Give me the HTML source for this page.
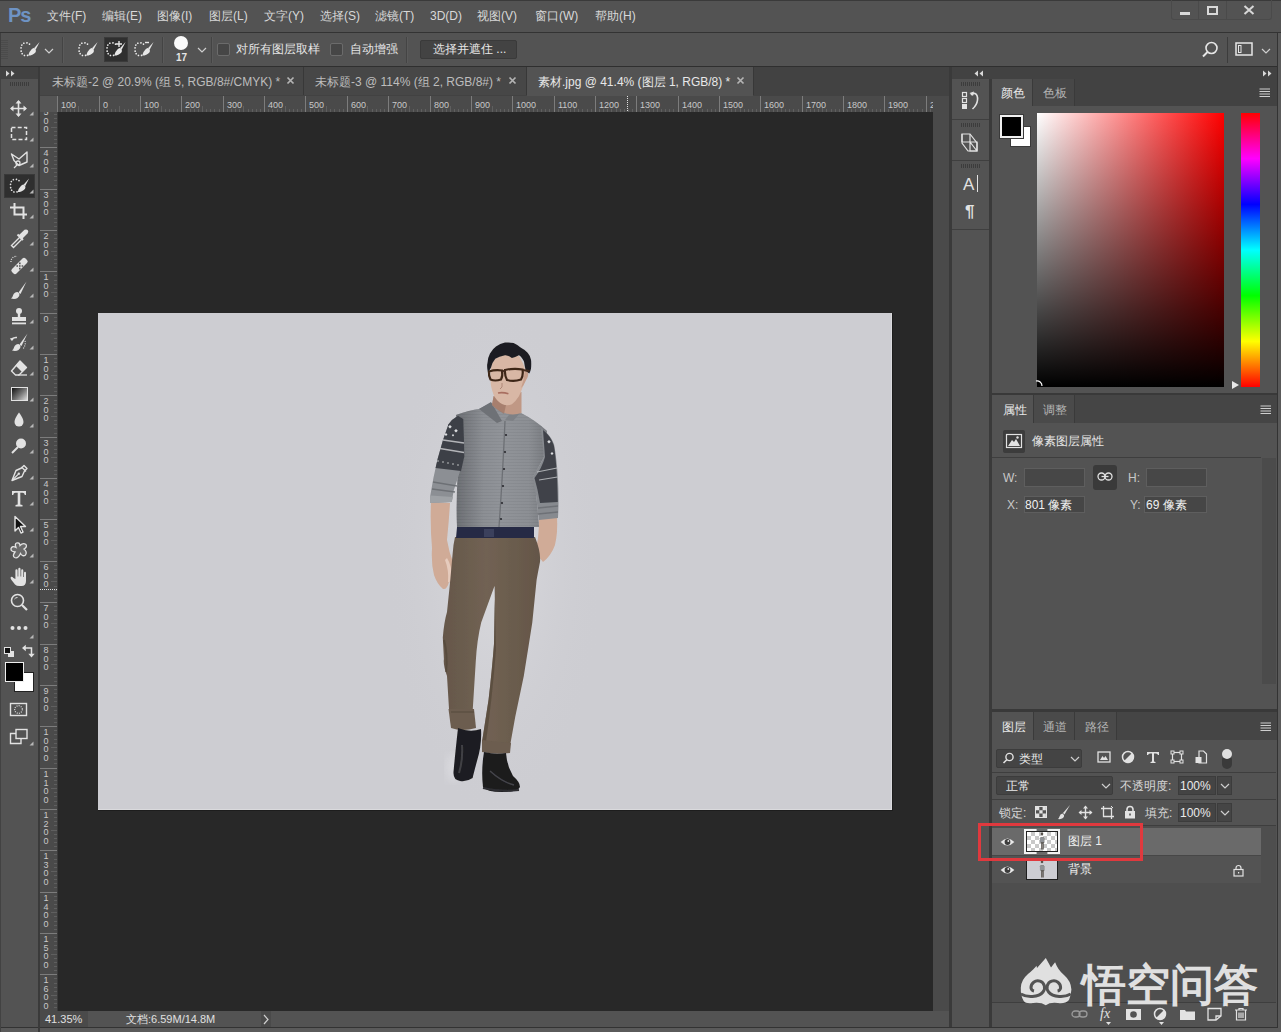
<!DOCTYPE html>
<html><head><meta charset="utf-8">
<style>
*{box-sizing:border-box;margin:0;padding:0}
html,body{width:1281px;height:1032px;overflow:hidden;background:#535353;font-family:"Liberation Sans",sans-serif;color:#e6e6e6;font-size:12px}
.a{position:absolute}
.t{position:absolute;white-space:nowrap;line-height:1}
svg{overflow:visible}
</style></head><body>
<div class="a" style="left:0px;top:0px;width:1281px;height:1px;background:#3a3a3a;"></div>
<div class="a" style="left:0px;top:32px;width:1281px;height:1px;background:#333;"></div>
<div class="t" style="left:8px;top:5px;font-size:20px;font-weight:bold;color:#6e93c4;letter-spacing:-1px">Ps</div>
<div class="t" style="left:47px;top:10px;color:#d8d8d8">文件(F)</div>
<div class="t" style="left:102px;top:10px;color:#d8d8d8">编辑(E)</div>
<div class="t" style="left:157px;top:10px;color:#d8d8d8">图像(I)</div>
<div class="t" style="left:209px;top:10px;color:#d8d8d8">图层(L)</div>
<div class="t" style="left:264px;top:10px;color:#d8d8d8">文字(Y)</div>
<div class="t" style="left:320px;top:10px;color:#d8d8d8">选择(S)</div>
<div class="t" style="left:375px;top:10px;color:#d8d8d8">滤镜(T)</div>
<div class="t" style="left:430px;top:10px;color:#d8d8d8">3D(D)</div>
<div class="t" style="left:477px;top:10px;color:#d8d8d8">视图(V)</div>
<div class="t" style="left:535px;top:10px;color:#d8d8d8">窗口(W)</div>
<div class="t" style="left:595px;top:10px;color:#d8d8d8">帮助(H)</div>
<div class="a" style="left:1171px;top:0px;width:101px;height:20px;border:1px solid #4a4a4a;border-top:none;border-radius:0 0 3px 3px"></div>
<div class="a" style="left:1198px;top:1px;width:1px;height:18px;background:#4a4a4a;"></div>
<div class="a" style="left:1226px;top:1px;width:1px;height:18px;background:#4a4a4a;"></div>
<div class="a" style="left:1180px;top:12px;width:10px;height:3px;background:#d8d8d8;"></div>
<div class="a" style="left:1207px;top:6px;width:11px;height:9px;border:2px solid #d8d8d8"></div>
<svg class="a" style="left:1243px;top:5px" width="12" height="10"><path d="M1.5 1 L10.5 9 M10.5 1 L1.5 9" stroke="#d8d8d8" stroke-width="2"/></svg>
<div class="a" style="left:0px;top:66px;width:1281px;height:1px;background:#2f2f2f;"></div>
<div class="a" style="left:0px;top:33px;width:1px;height:33px;background:#3f3f3f;"></div>
<div class="a" style="left:1px;top:40px;width:7px;height:19px;background:repeating-linear-gradient(180deg,#4b4b4b 0 1px,transparent 1px 2px);"></div>
<svg class="a" style="left:18px;top:39px" width="24" height="20" viewBox="0 0 24 20"><path d="M11.5 5.2 Q10 3.6 7.5 3.8 Q3 4.3 3 10 Q3 16 7.5 16.7 Q9.5 16.8 10.5 15.8" fill="none" stroke="#ececec" stroke-width="1.7" stroke-linecap="round" stroke-dasharray="0.01 2.9"/><path d="M21.6 3 L16 9.3 L17.6 10.7 Z" fill="#e8e8e8"/><path d="M15.8 9 Q19 10.8 17.4 13.4 Q14.8 16.4 10.2 16.6 Q11.2 12.6 13.4 10.6 Q14.6 9.2 15.8 9 Z" fill="#e8e8e8"/></svg>
<svg class="a" style="left:44px;top:47px" width="10" height="8"><path d="M1 2 L5 6 L9 2" fill="none" stroke="#cfcfcf" stroke-width="1.2"/></svg>
<div class="a" style="left:62px;top:37px;width:1px;height:26px;background:#444;"></div>
<div class="a" style="left:63px;top:37px;width:1px;height:26px;background:#5a5a5a;"></div>
<div class="a" style="left:162px;top:37px;width:1px;height:26px;background:#444;"></div>
<div class="a" style="left:163px;top:37px;width:1px;height:26px;background:#5a5a5a;"></div>
<div class="a" style="left:211px;top:37px;width:1px;height:26px;background:#444;"></div>
<div class="a" style="left:212px;top:37px;width:1px;height:26px;background:#5a5a5a;"></div>
<div class="a" style="left:406px;top:37px;width:1px;height:26px;background:#444;"></div>
<div class="a" style="left:407px;top:37px;width:1px;height:26px;background:#5a5a5a;"></div>
<div class="a" style="left:104px;top:37px;width:24px;height:25px;background:#2f2f2f;border:1px solid #3a3a3a"></div>
<svg class="a" style="left:76px;top:39px" width="24" height="20" viewBox="0 0 24 20"><path d="M11.5 5.2 Q10 3.6 7.5 3.8 Q3 4.3 3 10 Q3 16 7.5 16.7 Q9.5 16.8 10.5 15.8" fill="none" stroke="#ececec" stroke-width="1.7" stroke-linecap="round" stroke-dasharray="0.01 2.9"/><path d="M21.6 3 L16 9.3 L17.6 10.7 Z" fill="#e8e8e8"/><path d="M15.8 9 Q19 10.8 17.4 13.4 Q14.8 16.4 10.2 16.6 Q11.2 12.6 13.4 10.6 Q14.6 9.2 15.8 9 Z" fill="#e8e8e8"/></svg>
<svg class="a" style="left:104px;top:39px" width="24" height="20" viewBox="0 0 24 20"><path d="M11.5 5.2 Q10 3.6 7.5 3.8 Q3 4.3 3 10 Q3 16 7.5 16.7 Q9.5 16.8 10.5 15.8" fill="none" stroke="#ececec" stroke-width="1.7" stroke-linecap="round" stroke-dasharray="0.01 2.9"/><path d="M21.6 3 L16 9.3 L17.6 10.7 Z" fill="#e8e8e8"/><path d="M15.8 9 Q19 10.8 17.4 13.4 Q14.8 16.4 10.2 16.6 Q11.2 12.6 13.4 10.6 Q14.6 9.2 15.8 9 Z" fill="#e8e8e8"/><path d="M15 2v6M12 5h6" stroke="#e8e8e8" stroke-width="1.4"/></svg>
<svg class="a" style="left:132px;top:39px" width="24" height="20" viewBox="0 0 24 20"><path d="M11.5 5.2 Q10 3.6 7.5 3.8 Q3 4.3 3 10 Q3 16 7.5 16.7 Q9.5 16.8 10.5 15.8" fill="none" stroke="#ececec" stroke-width="1.7" stroke-linecap="round" stroke-dasharray="0.01 2.9"/><path d="M21.6 3 L16 9.3 L17.6 10.7 Z" fill="#e8e8e8"/><path d="M15.8 9 Q19 10.8 17.4 13.4 Q14.8 16.4 10.2 16.6 Q11.2 12.6 13.4 10.6 Q14.6 9.2 15.8 9 Z" fill="#e8e8e8"/><path d="M13 3.5h4" stroke="#e8e8e8" stroke-width="1.4"/></svg>
<div class="a" style="left:174px;top:36px;width:14px;height:14px;border-radius:50%;background:#fafafa"></div>
<div class="t" style="left:176px;top:53px;font-size:10px;font-weight:bold;color:#e6e6e6">17</div>
<svg class="a" style="left:197px;top:46px" width="10" height="8"><path d="M1 2 L5 6 L9 2" fill="none" stroke="#cfcfcf" stroke-width="1.2"/></svg>
<div class="a" style="left:217px;top:43px;width:13px;height:13px;border:1px solid #6b6b6b;background:#464646;border-radius:2px"></div>
<div class="a" style="left:330px;top:43px;width:13px;height:13px;border:1px solid #6b6b6b;background:#464646;border-radius:2px"></div>
<div class="t" style="left:236px;top:43px;">对所有图层取样</div>
<div class="t" style="left:350px;top:43px;">自动增强</div>
<div class="a" style="left:420px;top:40px;width:97px;height:19px;background:#434343;border:1px solid #3a3a3a;border-radius:2px"></div>
<div class="t" style="left:433px;top:43px;">选择并遮住 ...</div>
<svg class="a" style="left:1200px;top:40px" width="20" height="20"><circle cx="11.5" cy="8" r="5.5" fill="none" stroke="#e6e6e6" stroke-width="1.6"/><path d="M7.5 12 L3 16.5" stroke="#e6e6e6" stroke-width="2"/></svg>
<div class="a" style="left:1227px;top:37px;width:1px;height:26px;background:#3c3c3c;"></div>
<svg class="a" style="left:1235px;top:41px" width="20" height="16"><rect x="1" y="2" width="16" height="12" fill="none" stroke="#e6e6e6" stroke-width="1.5"/><rect x="3.5" y="4.5" width="2.5" height="7" fill="none" stroke="#e6e6e6" stroke-width="1"/></svg>
<svg class="a" style="left:1261px;top:47px" width="10" height="8"><path d="M1 2 L5 6 L9 2" fill="none" stroke="#cfcfcf" stroke-width="1.2"/></svg>
<div class="a" style="left:40px;top:67px;width:909px;height:29px;background:#424242;"></div>
<div class="a" style="left:40px;top:67px;width:263px;height:28px;background:#474747;"></div>
<div class="a" style="left:303px;top:67px;width:1px;height:28px;background:#383838;"></div>
<div class="a" style="left:304px;top:67px;width:222px;height:28px;background:#474747;"></div>
<div class="a" style="left:526px;top:67px;width:1px;height:28px;background:#383838;"></div>
<div class="a" style="left:527px;top:67px;width:226px;height:29px;background:#535353;"></div>
<div class="a" style="left:753px;top:67px;width:1px;height:28px;background:#383838;"></div>
<div class="t" style="left:52px;top:76px;color:#bdbdbd">未标题-2 @ 20.9% (组 5, RGB/8#/CMYK) *</div>
<div class="t" style="left:315px;top:76px;color:#bdbdbd">未标题-3 @ 114% (组 2, RGB/8#) *</div>
<div class="t" style="left:538px;top:76px;color:#e8e8e8">素材.jpg @ 41.4% (图层 1, RGB/8) *</div>
<svg class="a" style="left:286px;top:76px" width="9" height="9"><path d="M1.5 1.5 L7.5 7.5 M7.5 1.5 L1.5 7.5" stroke="#b4b4b4" stroke-width="1.7"/></svg>
<svg class="a" style="left:508px;top:76px" width="9" height="9"><path d="M1.5 1.5 L7.5 7.5 M7.5 1.5 L1.5 7.5" stroke="#b4b4b4" stroke-width="1.7"/></svg>
<svg class="a" style="left:736px;top:76px" width="9" height="9"><path d="M1.5 1.5 L7.5 7.5 M7.5 1.5 L1.5 7.5" stroke="#b4b4b4" stroke-width="1.7"/></svg>
<div class="a" style="left:40px;top:96px;width:893px;height:16px;background:#4a4a4a;"></div>
<div class="a" style="left:40px;top:96px;width:17px;height:16px;background:#555;"></div>
<div class="a" style="left:57px;top:96px;width:876px;height:16px;overflow:hidden"><div class="a" style="left:0px;top:0px;width:1px;height:16px;background:#7c7c7c"></div><div class="a" style="left:4px;top:13px;width:1px;height:3px;background:#5f5f5f"></div><div class="a" style="left:9px;top:13px;width:1px;height:3px;background:#5f5f5f"></div><div class="a" style="left:13px;top:13px;width:1px;height:3px;background:#5f5f5f"></div><div class="a" style="left:17px;top:13px;width:1px;height:3px;background:#5f5f5f"></div><div class="a" style="left:21px;top:10px;width:1px;height:6px;background:#5f5f5f"></div><div class="a" style="left:25px;top:13px;width:1px;height:3px;background:#5f5f5f"></div><div class="a" style="left:29px;top:13px;width:1px;height:3px;background:#5f5f5f"></div><div class="a" style="left:33px;top:13px;width:1px;height:3px;background:#5f5f5f"></div><div class="a" style="left:38px;top:13px;width:1px;height:3px;background:#5f5f5f"></div><div class="t" style="left:4px;top:5px;font-size:9px;color:#c8c8c8">100</div><div class="a" style="left:42px;top:0px;width:1px;height:16px;background:#7c7c7c"></div><div class="a" style="left:46px;top:13px;width:1px;height:3px;background:#5f5f5f"></div><div class="a" style="left:50px;top:13px;width:1px;height:3px;background:#5f5f5f"></div><div class="a" style="left:54px;top:13px;width:1px;height:3px;background:#5f5f5f"></div><div class="a" style="left:58px;top:13px;width:1px;height:3px;background:#5f5f5f"></div><div class="a" style="left:62px;top:10px;width:1px;height:6px;background:#5f5f5f"></div><div class="a" style="left:67px;top:13px;width:1px;height:3px;background:#5f5f5f"></div><div class="a" style="left:71px;top:13px;width:1px;height:3px;background:#5f5f5f"></div><div class="a" style="left:75px;top:13px;width:1px;height:3px;background:#5f5f5f"></div><div class="a" style="left:79px;top:13px;width:1px;height:3px;background:#5f5f5f"></div><div class="t" style="left:46px;top:5px;font-size:9px;color:#c8c8c8">0</div><div class="a" style="left:83px;top:0px;width:1px;height:16px;background:#7c7c7c"></div><div class="a" style="left:87px;top:13px;width:1px;height:3px;background:#5f5f5f"></div><div class="a" style="left:91px;top:13px;width:1px;height:3px;background:#5f5f5f"></div><div class="a" style="left:95px;top:13px;width:1px;height:3px;background:#5f5f5f"></div><div class="a" style="left:100px;top:13px;width:1px;height:3px;background:#5f5f5f"></div><div class="a" style="left:104px;top:10px;width:1px;height:6px;background:#5f5f5f"></div><div class="a" style="left:108px;top:13px;width:1px;height:3px;background:#5f5f5f"></div><div class="a" style="left:112px;top:13px;width:1px;height:3px;background:#5f5f5f"></div><div class="a" style="left:116px;top:13px;width:1px;height:3px;background:#5f5f5f"></div><div class="a" style="left:120px;top:13px;width:1px;height:3px;background:#5f5f5f"></div><div class="t" style="left:87px;top:5px;font-size:9px;color:#c8c8c8">100</div><div class="a" style="left:124px;top:0px;width:1px;height:16px;background:#7c7c7c"></div><div class="a" style="left:129px;top:13px;width:1px;height:3px;background:#5f5f5f"></div><div class="a" style="left:133px;top:13px;width:1px;height:3px;background:#5f5f5f"></div><div class="a" style="left:137px;top:13px;width:1px;height:3px;background:#5f5f5f"></div><div class="a" style="left:141px;top:13px;width:1px;height:3px;background:#5f5f5f"></div><div class="a" style="left:145px;top:10px;width:1px;height:6px;background:#5f5f5f"></div><div class="a" style="left:149px;top:13px;width:1px;height:3px;background:#5f5f5f"></div><div class="a" style="left:153px;top:13px;width:1px;height:3px;background:#5f5f5f"></div><div class="a" style="left:157px;top:13px;width:1px;height:3px;background:#5f5f5f"></div><div class="a" style="left:162px;top:13px;width:1px;height:3px;background:#5f5f5f"></div><div class="t" style="left:128px;top:5px;font-size:9px;color:#c8c8c8">200</div><div class="a" style="left:166px;top:0px;width:1px;height:16px;background:#7c7c7c"></div><div class="a" style="left:170px;top:13px;width:1px;height:3px;background:#5f5f5f"></div><div class="a" style="left:174px;top:13px;width:1px;height:3px;background:#5f5f5f"></div><div class="a" style="left:178px;top:13px;width:1px;height:3px;background:#5f5f5f"></div><div class="a" style="left:182px;top:13px;width:1px;height:3px;background:#5f5f5f"></div><div class="a" style="left:186px;top:10px;width:1px;height:6px;background:#5f5f5f"></div><div class="a" style="left:191px;top:13px;width:1px;height:3px;background:#5f5f5f"></div><div class="a" style="left:195px;top:13px;width:1px;height:3px;background:#5f5f5f"></div><div class="a" style="left:199px;top:13px;width:1px;height:3px;background:#5f5f5f"></div><div class="a" style="left:203px;top:13px;width:1px;height:3px;background:#5f5f5f"></div><div class="t" style="left:170px;top:5px;font-size:9px;color:#c8c8c8">300</div><div class="a" style="left:207px;top:0px;width:1px;height:16px;background:#7c7c7c"></div><div class="a" style="left:211px;top:13px;width:1px;height:3px;background:#5f5f5f"></div><div class="a" style="left:215px;top:13px;width:1px;height:3px;background:#5f5f5f"></div><div class="a" style="left:220px;top:13px;width:1px;height:3px;background:#5f5f5f"></div><div class="a" style="left:224px;top:13px;width:1px;height:3px;background:#5f5f5f"></div><div class="a" style="left:228px;top:10px;width:1px;height:6px;background:#5f5f5f"></div><div class="a" style="left:232px;top:13px;width:1px;height:3px;background:#5f5f5f"></div><div class="a" style="left:236px;top:13px;width:1px;height:3px;background:#5f5f5f"></div><div class="a" style="left:240px;top:13px;width:1px;height:3px;background:#5f5f5f"></div><div class="a" style="left:244px;top:13px;width:1px;height:3px;background:#5f5f5f"></div><div class="t" style="left:211px;top:5px;font-size:9px;color:#c8c8c8">400</div><div class="a" style="left:248px;top:0px;width:1px;height:16px;background:#7c7c7c"></div><div class="a" style="left:253px;top:13px;width:1px;height:3px;background:#5f5f5f"></div><div class="a" style="left:257px;top:13px;width:1px;height:3px;background:#5f5f5f"></div><div class="a" style="left:261px;top:13px;width:1px;height:3px;background:#5f5f5f"></div><div class="a" style="left:265px;top:13px;width:1px;height:3px;background:#5f5f5f"></div><div class="a" style="left:269px;top:10px;width:1px;height:6px;background:#5f5f5f"></div><div class="a" style="left:273px;top:13px;width:1px;height:3px;background:#5f5f5f"></div><div class="a" style="left:277px;top:13px;width:1px;height:3px;background:#5f5f5f"></div><div class="a" style="left:282px;top:13px;width:1px;height:3px;background:#5f5f5f"></div><div class="a" style="left:286px;top:13px;width:1px;height:3px;background:#5f5f5f"></div><div class="t" style="left:252px;top:5px;font-size:9px;color:#c8c8c8">500</div><div class="a" style="left:290px;top:0px;width:1px;height:16px;background:#7c7c7c"></div><div class="a" style="left:294px;top:13px;width:1px;height:3px;background:#5f5f5f"></div><div class="a" style="left:298px;top:13px;width:1px;height:3px;background:#5f5f5f"></div><div class="a" style="left:302px;top:13px;width:1px;height:3px;background:#5f5f5f"></div><div class="a" style="left:306px;top:13px;width:1px;height:3px;background:#5f5f5f"></div><div class="a" style="left:310px;top:10px;width:1px;height:6px;background:#5f5f5f"></div><div class="a" style="left:315px;top:13px;width:1px;height:3px;background:#5f5f5f"></div><div class="a" style="left:319px;top:13px;width:1px;height:3px;background:#5f5f5f"></div><div class="a" style="left:323px;top:13px;width:1px;height:3px;background:#5f5f5f"></div><div class="a" style="left:327px;top:13px;width:1px;height:3px;background:#5f5f5f"></div><div class="t" style="left:294px;top:5px;font-size:9px;color:#c8c8c8">600</div><div class="a" style="left:331px;top:0px;width:1px;height:16px;background:#7c7c7c"></div><div class="a" style="left:335px;top:13px;width:1px;height:3px;background:#5f5f5f"></div><div class="a" style="left:339px;top:13px;width:1px;height:3px;background:#5f5f5f"></div><div class="a" style="left:344px;top:13px;width:1px;height:3px;background:#5f5f5f"></div><div class="a" style="left:348px;top:13px;width:1px;height:3px;background:#5f5f5f"></div><div class="a" style="left:352px;top:10px;width:1px;height:6px;background:#5f5f5f"></div><div class="a" style="left:356px;top:13px;width:1px;height:3px;background:#5f5f5f"></div><div class="a" style="left:360px;top:13px;width:1px;height:3px;background:#5f5f5f"></div><div class="a" style="left:364px;top:13px;width:1px;height:3px;background:#5f5f5f"></div><div class="a" style="left:368px;top:13px;width:1px;height:3px;background:#5f5f5f"></div><div class="t" style="left:335px;top:5px;font-size:9px;color:#c8c8c8">700</div><div class="a" style="left:373px;top:0px;width:1px;height:16px;background:#7c7c7c"></div><div class="a" style="left:377px;top:13px;width:1px;height:3px;background:#5f5f5f"></div><div class="a" style="left:381px;top:13px;width:1px;height:3px;background:#5f5f5f"></div><div class="a" style="left:385px;top:13px;width:1px;height:3px;background:#5f5f5f"></div><div class="a" style="left:389px;top:13px;width:1px;height:3px;background:#5f5f5f"></div><div class="a" style="left:393px;top:10px;width:1px;height:6px;background:#5f5f5f"></div><div class="a" style="left:397px;top:13px;width:1px;height:3px;background:#5f5f5f"></div><div class="a" style="left:401px;top:13px;width:1px;height:3px;background:#5f5f5f"></div><div class="a" style="left:406px;top:13px;width:1px;height:3px;background:#5f5f5f"></div><div class="a" style="left:410px;top:13px;width:1px;height:3px;background:#5f5f5f"></div><div class="t" style="left:377px;top:5px;font-size:9px;color:#c8c8c8">800</div><div class="a" style="left:414px;top:0px;width:1px;height:16px;background:#7c7c7c"></div><div class="a" style="left:418px;top:13px;width:1px;height:3px;background:#5f5f5f"></div><div class="a" style="left:422px;top:13px;width:1px;height:3px;background:#5f5f5f"></div><div class="a" style="left:426px;top:13px;width:1px;height:3px;background:#5f5f5f"></div><div class="a" style="left:430px;top:13px;width:1px;height:3px;background:#5f5f5f"></div><div class="a" style="left:435px;top:10px;width:1px;height:6px;background:#5f5f5f"></div><div class="a" style="left:439px;top:13px;width:1px;height:3px;background:#5f5f5f"></div><div class="a" style="left:443px;top:13px;width:1px;height:3px;background:#5f5f5f"></div><div class="a" style="left:447px;top:13px;width:1px;height:3px;background:#5f5f5f"></div><div class="a" style="left:451px;top:13px;width:1px;height:3px;background:#5f5f5f"></div><div class="t" style="left:418px;top:5px;font-size:9px;color:#c8c8c8">900</div><div class="a" style="left:455px;top:0px;width:1px;height:16px;background:#7c7c7c"></div><div class="a" style="left:459px;top:13px;width:1px;height:3px;background:#5f5f5f"></div><div class="a" style="left:463px;top:13px;width:1px;height:3px;background:#5f5f5f"></div><div class="a" style="left:468px;top:13px;width:1px;height:3px;background:#5f5f5f"></div><div class="a" style="left:472px;top:13px;width:1px;height:3px;background:#5f5f5f"></div><div class="a" style="left:476px;top:10px;width:1px;height:6px;background:#5f5f5f"></div><div class="a" style="left:480px;top:13px;width:1px;height:3px;background:#5f5f5f"></div><div class="a" style="left:484px;top:13px;width:1px;height:3px;background:#5f5f5f"></div><div class="a" style="left:488px;top:13px;width:1px;height:3px;background:#5f5f5f"></div><div class="a" style="left:492px;top:13px;width:1px;height:3px;background:#5f5f5f"></div><div class="t" style="left:459px;top:5px;font-size:9px;color:#c8c8c8">1000</div><div class="a" style="left:497px;top:0px;width:1px;height:16px;background:#7c7c7c"></div><div class="a" style="left:501px;top:13px;width:1px;height:3px;background:#5f5f5f"></div><div class="a" style="left:505px;top:13px;width:1px;height:3px;background:#5f5f5f"></div><div class="a" style="left:509px;top:13px;width:1px;height:3px;background:#5f5f5f"></div><div class="a" style="left:513px;top:13px;width:1px;height:3px;background:#5f5f5f"></div><div class="a" style="left:517px;top:10px;width:1px;height:6px;background:#5f5f5f"></div><div class="a" style="left:521px;top:13px;width:1px;height:3px;background:#5f5f5f"></div><div class="a" style="left:525px;top:13px;width:1px;height:3px;background:#5f5f5f"></div><div class="a" style="left:530px;top:13px;width:1px;height:3px;background:#5f5f5f"></div><div class="a" style="left:534px;top:13px;width:1px;height:3px;background:#5f5f5f"></div><div class="t" style="left:501px;top:5px;font-size:9px;color:#c8c8c8">1100</div><div class="a" style="left:538px;top:0px;width:1px;height:16px;background:#7c7c7c"></div><div class="a" style="left:542px;top:13px;width:1px;height:3px;background:#5f5f5f"></div><div class="a" style="left:546px;top:13px;width:1px;height:3px;background:#5f5f5f"></div><div class="a" style="left:550px;top:13px;width:1px;height:3px;background:#5f5f5f"></div><div class="a" style="left:554px;top:13px;width:1px;height:3px;background:#5f5f5f"></div><div class="a" style="left:559px;top:10px;width:1px;height:6px;background:#5f5f5f"></div><div class="a" style="left:563px;top:13px;width:1px;height:3px;background:#5f5f5f"></div><div class="a" style="left:567px;top:13px;width:1px;height:3px;background:#5f5f5f"></div><div class="a" style="left:571px;top:13px;width:1px;height:3px;background:#5f5f5f"></div><div class="a" style="left:575px;top:13px;width:1px;height:3px;background:#5f5f5f"></div><div class="t" style="left:542px;top:5px;font-size:9px;color:#c8c8c8">1200</div><div class="a" style="left:579px;top:0px;width:1px;height:16px;background:#7c7c7c"></div><div class="a" style="left:583px;top:13px;width:1px;height:3px;background:#5f5f5f"></div><div class="a" style="left:588px;top:13px;width:1px;height:3px;background:#5f5f5f"></div><div class="a" style="left:592px;top:13px;width:1px;height:3px;background:#5f5f5f"></div><div class="a" style="left:596px;top:13px;width:1px;height:3px;background:#5f5f5f"></div><div class="a" style="left:600px;top:10px;width:1px;height:6px;background:#5f5f5f"></div><div class="a" style="left:604px;top:13px;width:1px;height:3px;background:#5f5f5f"></div><div class="a" style="left:608px;top:13px;width:1px;height:3px;background:#5f5f5f"></div><div class="a" style="left:612px;top:13px;width:1px;height:3px;background:#5f5f5f"></div><div class="a" style="left:616px;top:13px;width:1px;height:3px;background:#5f5f5f"></div><div class="t" style="left:583px;top:5px;font-size:9px;color:#c8c8c8">1300</div><div class="a" style="left:621px;top:0px;width:1px;height:16px;background:#7c7c7c"></div><div class="a" style="left:625px;top:13px;width:1px;height:3px;background:#5f5f5f"></div><div class="a" style="left:629px;top:13px;width:1px;height:3px;background:#5f5f5f"></div><div class="a" style="left:633px;top:13px;width:1px;height:3px;background:#5f5f5f"></div><div class="a" style="left:637px;top:13px;width:1px;height:3px;background:#5f5f5f"></div><div class="a" style="left:641px;top:10px;width:1px;height:6px;background:#5f5f5f"></div><div class="a" style="left:645px;top:13px;width:1px;height:3px;background:#5f5f5f"></div><div class="a" style="left:650px;top:13px;width:1px;height:3px;background:#5f5f5f"></div><div class="a" style="left:654px;top:13px;width:1px;height:3px;background:#5f5f5f"></div><div class="a" style="left:658px;top:13px;width:1px;height:3px;background:#5f5f5f"></div><div class="t" style="left:625px;top:5px;font-size:9px;color:#c8c8c8">1400</div><div class="a" style="left:662px;top:0px;width:1px;height:16px;background:#7c7c7c"></div><div class="a" style="left:666px;top:13px;width:1px;height:3px;background:#5f5f5f"></div><div class="a" style="left:670px;top:13px;width:1px;height:3px;background:#5f5f5f"></div><div class="a" style="left:674px;top:13px;width:1px;height:3px;background:#5f5f5f"></div><div class="a" style="left:678px;top:13px;width:1px;height:3px;background:#5f5f5f"></div><div class="a" style="left:683px;top:10px;width:1px;height:6px;background:#5f5f5f"></div><div class="a" style="left:687px;top:13px;width:1px;height:3px;background:#5f5f5f"></div><div class="a" style="left:691px;top:13px;width:1px;height:3px;background:#5f5f5f"></div><div class="a" style="left:695px;top:13px;width:1px;height:3px;background:#5f5f5f"></div><div class="a" style="left:699px;top:13px;width:1px;height:3px;background:#5f5f5f"></div><div class="t" style="left:666px;top:5px;font-size:9px;color:#c8c8c8">1500</div><div class="a" style="left:703px;top:0px;width:1px;height:16px;background:#7c7c7c"></div><div class="a" style="left:707px;top:13px;width:1px;height:3px;background:#5f5f5f"></div><div class="a" style="left:712px;top:13px;width:1px;height:3px;background:#5f5f5f"></div><div class="a" style="left:716px;top:13px;width:1px;height:3px;background:#5f5f5f"></div><div class="a" style="left:720px;top:13px;width:1px;height:3px;background:#5f5f5f"></div><div class="a" style="left:724px;top:10px;width:1px;height:6px;background:#5f5f5f"></div><div class="a" style="left:728px;top:13px;width:1px;height:3px;background:#5f5f5f"></div><div class="a" style="left:732px;top:13px;width:1px;height:3px;background:#5f5f5f"></div><div class="a" style="left:736px;top:13px;width:1px;height:3px;background:#5f5f5f"></div><div class="a" style="left:741px;top:13px;width:1px;height:3px;background:#5f5f5f"></div><div class="t" style="left:707px;top:5px;font-size:9px;color:#c8c8c8">1600</div><div class="a" style="left:745px;top:0px;width:1px;height:16px;background:#7c7c7c"></div><div class="a" style="left:749px;top:13px;width:1px;height:3px;background:#5f5f5f"></div><div class="a" style="left:753px;top:13px;width:1px;height:3px;background:#5f5f5f"></div><div class="a" style="left:757px;top:13px;width:1px;height:3px;background:#5f5f5f"></div><div class="a" style="left:761px;top:13px;width:1px;height:3px;background:#5f5f5f"></div><div class="a" style="left:765px;top:10px;width:1px;height:6px;background:#5f5f5f"></div><div class="a" style="left:769px;top:13px;width:1px;height:3px;background:#5f5f5f"></div><div class="a" style="left:774px;top:13px;width:1px;height:3px;background:#5f5f5f"></div><div class="a" style="left:778px;top:13px;width:1px;height:3px;background:#5f5f5f"></div><div class="a" style="left:782px;top:13px;width:1px;height:3px;background:#5f5f5f"></div><div class="t" style="left:749px;top:5px;font-size:9px;color:#c8c8c8">1700</div><div class="a" style="left:786px;top:0px;width:1px;height:16px;background:#7c7c7c"></div><div class="a" style="left:790px;top:13px;width:1px;height:3px;background:#5f5f5f"></div><div class="a" style="left:794px;top:13px;width:1px;height:3px;background:#5f5f5f"></div><div class="a" style="left:798px;top:13px;width:1px;height:3px;background:#5f5f5f"></div><div class="a" style="left:803px;top:13px;width:1px;height:3px;background:#5f5f5f"></div><div class="a" style="left:807px;top:10px;width:1px;height:6px;background:#5f5f5f"></div><div class="a" style="left:811px;top:13px;width:1px;height:3px;background:#5f5f5f"></div><div class="a" style="left:815px;top:13px;width:1px;height:3px;background:#5f5f5f"></div><div class="a" style="left:819px;top:13px;width:1px;height:3px;background:#5f5f5f"></div><div class="a" style="left:823px;top:13px;width:1px;height:3px;background:#5f5f5f"></div><div class="t" style="left:790px;top:5px;font-size:9px;color:#c8c8c8">1800</div><div class="a" style="left:827px;top:0px;width:1px;height:16px;background:#7c7c7c"></div><div class="a" style="left:831px;top:13px;width:1px;height:3px;background:#5f5f5f"></div><div class="a" style="left:836px;top:13px;width:1px;height:3px;background:#5f5f5f"></div><div class="a" style="left:840px;top:13px;width:1px;height:3px;background:#5f5f5f"></div><div class="a" style="left:844px;top:13px;width:1px;height:3px;background:#5f5f5f"></div><div class="a" style="left:848px;top:10px;width:1px;height:6px;background:#5f5f5f"></div><div class="a" style="left:852px;top:13px;width:1px;height:3px;background:#5f5f5f"></div><div class="a" style="left:856px;top:13px;width:1px;height:3px;background:#5f5f5f"></div><div class="a" style="left:860px;top:13px;width:1px;height:3px;background:#5f5f5f"></div><div class="a" style="left:865px;top:13px;width:1px;height:3px;background:#5f5f5f"></div><div class="t" style="left:831px;top:5px;font-size:9px;color:#c8c8c8">1900</div><div class="a" style="left:869px;top:0px;width:1px;height:16px;background:#7c7c7c"></div><div class="a" style="left:873px;top:13px;width:1px;height:3px;background:#5f5f5f"></div><div class="t" style="left:873px;top:5px;font-size:9px;color:#c8c8c8">2000</div></div>
<div class="a" style="left:40px;top:112px;width:17px;height:899px;background:#4a4a4a;"></div>
<div class="a" style="left:40px;top:112px;width:17px;height:899px;overflow:hidden"><div class="a" style="left:2px;top:-45px;width:8px;font-size:9px;line-height:8.7px;color:#c8c8c8;text-align:center;word-break:break-all">600</div><div class="a" style="left:14px;top:2px;width:3px;height:1px;background:#5f5f5f"></div><div class="a" style="left:14px;top:6px;width:3px;height:1px;background:#5f5f5f"></div><div class="a" style="left:14px;top:10px;width:3px;height:1px;background:#5f5f5f"></div><div class="a" style="left:11px;top:15px;width:6px;height:1px;background:#5f5f5f"></div><div class="a" style="left:14px;top:19px;width:3px;height:1px;background:#5f5f5f"></div><div class="a" style="left:14px;top:23px;width:3px;height:1px;background:#5f5f5f"></div><div class="a" style="left:14px;top:27px;width:3px;height:1px;background:#5f5f5f"></div><div class="a" style="left:14px;top:31px;width:3px;height:1px;background:#5f5f5f"></div><div class="a" style="left:2px;top:-4px;width:8px;font-size:9px;line-height:8.7px;color:#c8c8c8;text-align:center;word-break:break-all">500</div><div class="a" style="left:0px;top:35px;width:17px;height:1px;background:#7c7c7c"></div><div class="a" style="left:14px;top:39px;width:3px;height:1px;background:#5f5f5f"></div><div class="a" style="left:14px;top:44px;width:3px;height:1px;background:#5f5f5f"></div><div class="a" style="left:14px;top:48px;width:3px;height:1px;background:#5f5f5f"></div><div class="a" style="left:14px;top:52px;width:3px;height:1px;background:#5f5f5f"></div><div class="a" style="left:11px;top:56px;width:6px;height:1px;background:#5f5f5f"></div><div class="a" style="left:14px;top:60px;width:3px;height:1px;background:#5f5f5f"></div><div class="a" style="left:14px;top:64px;width:3px;height:1px;background:#5f5f5f"></div><div class="a" style="left:14px;top:68px;width:3px;height:1px;background:#5f5f5f"></div><div class="a" style="left:14px;top:73px;width:3px;height:1px;background:#5f5f5f"></div><div class="a" style="left:2px;top:37px;width:8px;font-size:9px;line-height:8.7px;color:#c8c8c8;text-align:center;word-break:break-all">400</div><div class="a" style="left:0px;top:77px;width:17px;height:1px;background:#7c7c7c"></div><div class="a" style="left:14px;top:81px;width:3px;height:1px;background:#5f5f5f"></div><div class="a" style="left:14px;top:85px;width:3px;height:1px;background:#5f5f5f"></div><div class="a" style="left:14px;top:89px;width:3px;height:1px;background:#5f5f5f"></div><div class="a" style="left:14px;top:93px;width:3px;height:1px;background:#5f5f5f"></div><div class="a" style="left:11px;top:97px;width:6px;height:1px;background:#5f5f5f"></div><div class="a" style="left:14px;top:101px;width:3px;height:1px;background:#5f5f5f"></div><div class="a" style="left:14px;top:106px;width:3px;height:1px;background:#5f5f5f"></div><div class="a" style="left:14px;top:110px;width:3px;height:1px;background:#5f5f5f"></div><div class="a" style="left:14px;top:114px;width:3px;height:1px;background:#5f5f5f"></div><div class="a" style="left:2px;top:79px;width:8px;font-size:9px;line-height:8.7px;color:#c8c8c8;text-align:center;word-break:break-all">300</div><div class="a" style="left:0px;top:118px;width:17px;height:1px;background:#7c7c7c"></div><div class="a" style="left:14px;top:122px;width:3px;height:1px;background:#5f5f5f"></div><div class="a" style="left:14px;top:126px;width:3px;height:1px;background:#5f5f5f"></div><div class="a" style="left:14px;top:130px;width:3px;height:1px;background:#5f5f5f"></div><div class="a" style="left:14px;top:135px;width:3px;height:1px;background:#5f5f5f"></div><div class="a" style="left:11px;top:139px;width:6px;height:1px;background:#5f5f5f"></div><div class="a" style="left:14px;top:143px;width:3px;height:1px;background:#5f5f5f"></div><div class="a" style="left:14px;top:147px;width:3px;height:1px;background:#5f5f5f"></div><div class="a" style="left:14px;top:151px;width:3px;height:1px;background:#5f5f5f"></div><div class="a" style="left:14px;top:155px;width:3px;height:1px;background:#5f5f5f"></div><div class="a" style="left:2px;top:120px;width:8px;font-size:9px;line-height:8.7px;color:#c8c8c8;text-align:center;word-break:break-all">200</div><div class="a" style="left:0px;top:159px;width:17px;height:1px;background:#7c7c7c"></div><div class="a" style="left:14px;top:163px;width:3px;height:1px;background:#5f5f5f"></div><div class="a" style="left:14px;top:168px;width:3px;height:1px;background:#5f5f5f"></div><div class="a" style="left:14px;top:172px;width:3px;height:1px;background:#5f5f5f"></div><div class="a" style="left:14px;top:176px;width:3px;height:1px;background:#5f5f5f"></div><div class="a" style="left:11px;top:180px;width:6px;height:1px;background:#5f5f5f"></div><div class="a" style="left:14px;top:184px;width:3px;height:1px;background:#5f5f5f"></div><div class="a" style="left:14px;top:188px;width:3px;height:1px;background:#5f5f5f"></div><div class="a" style="left:14px;top:192px;width:3px;height:1px;background:#5f5f5f"></div><div class="a" style="left:14px;top:197px;width:3px;height:1px;background:#5f5f5f"></div><div class="a" style="left:2px;top:161px;width:8px;font-size:9px;line-height:8.7px;color:#c8c8c8;text-align:center;word-break:break-all">100</div><div class="a" style="left:0px;top:201px;width:17px;height:1px;background:#7c7c7c"></div><div class="a" style="left:14px;top:205px;width:3px;height:1px;background:#5f5f5f"></div><div class="a" style="left:14px;top:209px;width:3px;height:1px;background:#5f5f5f"></div><div class="a" style="left:14px;top:213px;width:3px;height:1px;background:#5f5f5f"></div><div class="a" style="left:14px;top:217px;width:3px;height:1px;background:#5f5f5f"></div><div class="a" style="left:11px;top:221px;width:6px;height:1px;background:#5f5f5f"></div><div class="a" style="left:14px;top:226px;width:3px;height:1px;background:#5f5f5f"></div><div class="a" style="left:14px;top:230px;width:3px;height:1px;background:#5f5f5f"></div><div class="a" style="left:14px;top:234px;width:3px;height:1px;background:#5f5f5f"></div><div class="a" style="left:14px;top:238px;width:3px;height:1px;background:#5f5f5f"></div><div class="a" style="left:2px;top:203px;width:8px;font-size:9px;line-height:8.7px;color:#c8c8c8;text-align:center;word-break:break-all">0</div><div class="a" style="left:0px;top:242px;width:17px;height:1px;background:#7c7c7c"></div><div class="a" style="left:14px;top:246px;width:3px;height:1px;background:#5f5f5f"></div><div class="a" style="left:14px;top:250px;width:3px;height:1px;background:#5f5f5f"></div><div class="a" style="left:14px;top:254px;width:3px;height:1px;background:#5f5f5f"></div><div class="a" style="left:14px;top:259px;width:3px;height:1px;background:#5f5f5f"></div><div class="a" style="left:11px;top:263px;width:6px;height:1px;background:#5f5f5f"></div><div class="a" style="left:14px;top:267px;width:3px;height:1px;background:#5f5f5f"></div><div class="a" style="left:14px;top:271px;width:3px;height:1px;background:#5f5f5f"></div><div class="a" style="left:14px;top:275px;width:3px;height:1px;background:#5f5f5f"></div><div class="a" style="left:14px;top:279px;width:3px;height:1px;background:#5f5f5f"></div><div class="a" style="left:2px;top:244px;width:8px;font-size:9px;line-height:8.7px;color:#c8c8c8;text-align:center;word-break:break-all">100</div><div class="a" style="left:0px;top:283px;width:17px;height:1px;background:#7c7c7c"></div><div class="a" style="left:14px;top:288px;width:3px;height:1px;background:#5f5f5f"></div><div class="a" style="left:14px;top:292px;width:3px;height:1px;background:#5f5f5f"></div><div class="a" style="left:14px;top:296px;width:3px;height:1px;background:#5f5f5f"></div><div class="a" style="left:14px;top:300px;width:3px;height:1px;background:#5f5f5f"></div><div class="a" style="left:11px;top:304px;width:6px;height:1px;background:#5f5f5f"></div><div class="a" style="left:14px;top:308px;width:3px;height:1px;background:#5f5f5f"></div><div class="a" style="left:14px;top:312px;width:3px;height:1px;background:#5f5f5f"></div><div class="a" style="left:14px;top:316px;width:3px;height:1px;background:#5f5f5f"></div><div class="a" style="left:14px;top:321px;width:3px;height:1px;background:#5f5f5f"></div><div class="a" style="left:2px;top:285px;width:8px;font-size:9px;line-height:8.7px;color:#c8c8c8;text-align:center;word-break:break-all">200</div><div class="a" style="left:0px;top:325px;width:17px;height:1px;background:#7c7c7c"></div><div class="a" style="left:14px;top:329px;width:3px;height:1px;background:#5f5f5f"></div><div class="a" style="left:14px;top:333px;width:3px;height:1px;background:#5f5f5f"></div><div class="a" style="left:14px;top:337px;width:3px;height:1px;background:#5f5f5f"></div><div class="a" style="left:14px;top:341px;width:3px;height:1px;background:#5f5f5f"></div><div class="a" style="left:11px;top:345px;width:6px;height:1px;background:#5f5f5f"></div><div class="a" style="left:14px;top:350px;width:3px;height:1px;background:#5f5f5f"></div><div class="a" style="left:14px;top:354px;width:3px;height:1px;background:#5f5f5f"></div><div class="a" style="left:14px;top:358px;width:3px;height:1px;background:#5f5f5f"></div><div class="a" style="left:14px;top:362px;width:3px;height:1px;background:#5f5f5f"></div><div class="a" style="left:2px;top:327px;width:8px;font-size:9px;line-height:8.7px;color:#c8c8c8;text-align:center;word-break:break-all">300</div><div class="a" style="left:0px;top:366px;width:17px;height:1px;background:#7c7c7c"></div><div class="a" style="left:14px;top:370px;width:3px;height:1px;background:#5f5f5f"></div><div class="a" style="left:14px;top:374px;width:3px;height:1px;background:#5f5f5f"></div><div class="a" style="left:14px;top:379px;width:3px;height:1px;background:#5f5f5f"></div><div class="a" style="left:14px;top:383px;width:3px;height:1px;background:#5f5f5f"></div><div class="a" style="left:11px;top:387px;width:6px;height:1px;background:#5f5f5f"></div><div class="a" style="left:14px;top:391px;width:3px;height:1px;background:#5f5f5f"></div><div class="a" style="left:14px;top:395px;width:3px;height:1px;background:#5f5f5f"></div><div class="a" style="left:14px;top:399px;width:3px;height:1px;background:#5f5f5f"></div><div class="a" style="left:14px;top:403px;width:3px;height:1px;background:#5f5f5f"></div><div class="a" style="left:2px;top:368px;width:8px;font-size:9px;line-height:8.7px;color:#c8c8c8;text-align:center;word-break:break-all">400</div><div class="a" style="left:0px;top:407px;width:17px;height:1px;background:#7c7c7c"></div><div class="a" style="left:14px;top:412px;width:3px;height:1px;background:#5f5f5f"></div><div class="a" style="left:14px;top:416px;width:3px;height:1px;background:#5f5f5f"></div><div class="a" style="left:14px;top:420px;width:3px;height:1px;background:#5f5f5f"></div><div class="a" style="left:14px;top:424px;width:3px;height:1px;background:#5f5f5f"></div><div class="a" style="left:11px;top:428px;width:6px;height:1px;background:#5f5f5f"></div><div class="a" style="left:14px;top:432px;width:3px;height:1px;background:#5f5f5f"></div><div class="a" style="left:14px;top:436px;width:3px;height:1px;background:#5f5f5f"></div><div class="a" style="left:14px;top:441px;width:3px;height:1px;background:#5f5f5f"></div><div class="a" style="left:14px;top:445px;width:3px;height:1px;background:#5f5f5f"></div><div class="a" style="left:2px;top:409px;width:8px;font-size:9px;line-height:8.7px;color:#c8c8c8;text-align:center;word-break:break-all">500</div><div class="a" style="left:0px;top:449px;width:17px;height:1px;background:#7c7c7c"></div><div class="a" style="left:14px;top:453px;width:3px;height:1px;background:#5f5f5f"></div><div class="a" style="left:14px;top:457px;width:3px;height:1px;background:#5f5f5f"></div><div class="a" style="left:14px;top:461px;width:3px;height:1px;background:#5f5f5f"></div><div class="a" style="left:14px;top:465px;width:3px;height:1px;background:#5f5f5f"></div><div class="a" style="left:11px;top:469px;width:6px;height:1px;background:#5f5f5f"></div><div class="a" style="left:14px;top:474px;width:3px;height:1px;background:#5f5f5f"></div><div class="a" style="left:14px;top:478px;width:3px;height:1px;background:#5f5f5f"></div><div class="a" style="left:14px;top:482px;width:3px;height:1px;background:#5f5f5f"></div><div class="a" style="left:14px;top:486px;width:3px;height:1px;background:#5f5f5f"></div><div class="a" style="left:2px;top:451px;width:8px;font-size:9px;line-height:8.7px;color:#c8c8c8;text-align:center;word-break:break-all">600</div><div class="a" style="left:0px;top:490px;width:17px;height:1px;background:#7c7c7c"></div><div class="a" style="left:14px;top:494px;width:3px;height:1px;background:#5f5f5f"></div><div class="a" style="left:14px;top:498px;width:3px;height:1px;background:#5f5f5f"></div><div class="a" style="left:14px;top:503px;width:3px;height:1px;background:#5f5f5f"></div><div class="a" style="left:14px;top:507px;width:3px;height:1px;background:#5f5f5f"></div><div class="a" style="left:11px;top:511px;width:6px;height:1px;background:#5f5f5f"></div><div class="a" style="left:14px;top:515px;width:3px;height:1px;background:#5f5f5f"></div><div class="a" style="left:14px;top:519px;width:3px;height:1px;background:#5f5f5f"></div><div class="a" style="left:14px;top:523px;width:3px;height:1px;background:#5f5f5f"></div><div class="a" style="left:14px;top:527px;width:3px;height:1px;background:#5f5f5f"></div><div class="a" style="left:2px;top:492px;width:8px;font-size:9px;line-height:8.7px;color:#c8c8c8;text-align:center;word-break:break-all">700</div><div class="a" style="left:0px;top:532px;width:17px;height:1px;background:#7c7c7c"></div><div class="a" style="left:14px;top:536px;width:3px;height:1px;background:#5f5f5f"></div><div class="a" style="left:14px;top:540px;width:3px;height:1px;background:#5f5f5f"></div><div class="a" style="left:14px;top:544px;width:3px;height:1px;background:#5f5f5f"></div><div class="a" style="left:14px;top:548px;width:3px;height:1px;background:#5f5f5f"></div><div class="a" style="left:11px;top:552px;width:6px;height:1px;background:#5f5f5f"></div><div class="a" style="left:14px;top:556px;width:3px;height:1px;background:#5f5f5f"></div><div class="a" style="left:14px;top:560px;width:3px;height:1px;background:#5f5f5f"></div><div class="a" style="left:14px;top:565px;width:3px;height:1px;background:#5f5f5f"></div><div class="a" style="left:14px;top:569px;width:3px;height:1px;background:#5f5f5f"></div><div class="a" style="left:2px;top:534px;width:8px;font-size:9px;line-height:8.7px;color:#c8c8c8;text-align:center;word-break:break-all">800</div><div class="a" style="left:0px;top:573px;width:17px;height:1px;background:#7c7c7c"></div><div class="a" style="left:14px;top:577px;width:3px;height:1px;background:#5f5f5f"></div><div class="a" style="left:14px;top:581px;width:3px;height:1px;background:#5f5f5f"></div><div class="a" style="left:14px;top:585px;width:3px;height:1px;background:#5f5f5f"></div><div class="a" style="left:14px;top:589px;width:3px;height:1px;background:#5f5f5f"></div><div class="a" style="left:11px;top:594px;width:6px;height:1px;background:#5f5f5f"></div><div class="a" style="left:14px;top:598px;width:3px;height:1px;background:#5f5f5f"></div><div class="a" style="left:14px;top:602px;width:3px;height:1px;background:#5f5f5f"></div><div class="a" style="left:14px;top:606px;width:3px;height:1px;background:#5f5f5f"></div><div class="a" style="left:14px;top:610px;width:3px;height:1px;background:#5f5f5f"></div><div class="a" style="left:2px;top:575px;width:8px;font-size:9px;line-height:8.7px;color:#c8c8c8;text-align:center;word-break:break-all">900</div><div class="a" style="left:0px;top:614px;width:17px;height:1px;background:#7c7c7c"></div><div class="a" style="left:14px;top:618px;width:3px;height:1px;background:#5f5f5f"></div><div class="a" style="left:14px;top:622px;width:3px;height:1px;background:#5f5f5f"></div><div class="a" style="left:14px;top:627px;width:3px;height:1px;background:#5f5f5f"></div><div class="a" style="left:14px;top:631px;width:3px;height:1px;background:#5f5f5f"></div><div class="a" style="left:11px;top:635px;width:6px;height:1px;background:#5f5f5f"></div><div class="a" style="left:14px;top:639px;width:3px;height:1px;background:#5f5f5f"></div><div class="a" style="left:14px;top:643px;width:3px;height:1px;background:#5f5f5f"></div><div class="a" style="left:14px;top:647px;width:3px;height:1px;background:#5f5f5f"></div><div class="a" style="left:14px;top:651px;width:3px;height:1px;background:#5f5f5f"></div><div class="a" style="left:2px;top:616px;width:8px;font-size:9px;line-height:8.7px;color:#c8c8c8;text-align:center;word-break:break-all">1000</div><div class="a" style="left:0px;top:656px;width:17px;height:1px;background:#7c7c7c"></div><div class="a" style="left:14px;top:660px;width:3px;height:1px;background:#5f5f5f"></div><div class="a" style="left:14px;top:664px;width:3px;height:1px;background:#5f5f5f"></div><div class="a" style="left:14px;top:668px;width:3px;height:1px;background:#5f5f5f"></div><div class="a" style="left:14px;top:672px;width:3px;height:1px;background:#5f5f5f"></div><div class="a" style="left:11px;top:676px;width:6px;height:1px;background:#5f5f5f"></div><div class="a" style="left:14px;top:680px;width:3px;height:1px;background:#5f5f5f"></div><div class="a" style="left:14px;top:684px;width:3px;height:1px;background:#5f5f5f"></div><div class="a" style="left:14px;top:689px;width:3px;height:1px;background:#5f5f5f"></div><div class="a" style="left:14px;top:693px;width:3px;height:1px;background:#5f5f5f"></div><div class="a" style="left:2px;top:658px;width:8px;font-size:9px;line-height:8.7px;color:#c8c8c8;text-align:center;word-break:break-all">1100</div><div class="a" style="left:0px;top:697px;width:17px;height:1px;background:#7c7c7c"></div><div class="a" style="left:14px;top:701px;width:3px;height:1px;background:#5f5f5f"></div><div class="a" style="left:14px;top:705px;width:3px;height:1px;background:#5f5f5f"></div><div class="a" style="left:14px;top:709px;width:3px;height:1px;background:#5f5f5f"></div><div class="a" style="left:14px;top:713px;width:3px;height:1px;background:#5f5f5f"></div><div class="a" style="left:11px;top:718px;width:6px;height:1px;background:#5f5f5f"></div><div class="a" style="left:14px;top:722px;width:3px;height:1px;background:#5f5f5f"></div><div class="a" style="left:14px;top:726px;width:3px;height:1px;background:#5f5f5f"></div><div class="a" style="left:14px;top:730px;width:3px;height:1px;background:#5f5f5f"></div><div class="a" style="left:14px;top:734px;width:3px;height:1px;background:#5f5f5f"></div><div class="a" style="left:2px;top:699px;width:8px;font-size:9px;line-height:8.7px;color:#c8c8c8;text-align:center;word-break:break-all">1200</div><div class="a" style="left:0px;top:738px;width:17px;height:1px;background:#7c7c7c"></div><div class="a" style="left:14px;top:742px;width:3px;height:1px;background:#5f5f5f"></div><div class="a" style="left:14px;top:747px;width:3px;height:1px;background:#5f5f5f"></div><div class="a" style="left:14px;top:751px;width:3px;height:1px;background:#5f5f5f"></div><div class="a" style="left:14px;top:755px;width:3px;height:1px;background:#5f5f5f"></div><div class="a" style="left:11px;top:759px;width:6px;height:1px;background:#5f5f5f"></div><div class="a" style="left:14px;top:763px;width:3px;height:1px;background:#5f5f5f"></div><div class="a" style="left:14px;top:767px;width:3px;height:1px;background:#5f5f5f"></div><div class="a" style="left:14px;top:771px;width:3px;height:1px;background:#5f5f5f"></div><div class="a" style="left:14px;top:775px;width:3px;height:1px;background:#5f5f5f"></div><div class="a" style="left:2px;top:740px;width:8px;font-size:9px;line-height:8.7px;color:#c8c8c8;text-align:center;word-break:break-all">1300</div><div class="a" style="left:0px;top:780px;width:17px;height:1px;background:#7c7c7c"></div><div class="a" style="left:14px;top:784px;width:3px;height:1px;background:#5f5f5f"></div><div class="a" style="left:14px;top:788px;width:3px;height:1px;background:#5f5f5f"></div><div class="a" style="left:14px;top:792px;width:3px;height:1px;background:#5f5f5f"></div><div class="a" style="left:14px;top:796px;width:3px;height:1px;background:#5f5f5f"></div><div class="a" style="left:11px;top:800px;width:6px;height:1px;background:#5f5f5f"></div><div class="a" style="left:14px;top:804px;width:3px;height:1px;background:#5f5f5f"></div><div class="a" style="left:14px;top:809px;width:3px;height:1px;background:#5f5f5f"></div><div class="a" style="left:14px;top:813px;width:3px;height:1px;background:#5f5f5f"></div><div class="a" style="left:14px;top:817px;width:3px;height:1px;background:#5f5f5f"></div><div class="a" style="left:2px;top:782px;width:8px;font-size:9px;line-height:8.7px;color:#c8c8c8;text-align:center;word-break:break-all">1400</div><div class="a" style="left:0px;top:821px;width:17px;height:1px;background:#7c7c7c"></div><div class="a" style="left:14px;top:825px;width:3px;height:1px;background:#5f5f5f"></div><div class="a" style="left:14px;top:829px;width:3px;height:1px;background:#5f5f5f"></div><div class="a" style="left:14px;top:833px;width:3px;height:1px;background:#5f5f5f"></div><div class="a" style="left:14px;top:837px;width:3px;height:1px;background:#5f5f5f"></div><div class="a" style="left:11px;top:842px;width:6px;height:1px;background:#5f5f5f"></div><div class="a" style="left:14px;top:846px;width:3px;height:1px;background:#5f5f5f"></div><div class="a" style="left:14px;top:850px;width:3px;height:1px;background:#5f5f5f"></div><div class="a" style="left:14px;top:854px;width:3px;height:1px;background:#5f5f5f"></div><div class="a" style="left:14px;top:858px;width:3px;height:1px;background:#5f5f5f"></div><div class="a" style="left:2px;top:823px;width:8px;font-size:9px;line-height:8.7px;color:#c8c8c8;text-align:center;word-break:break-all">1500</div><div class="a" style="left:0px;top:862px;width:17px;height:1px;background:#7c7c7c"></div><div class="a" style="left:14px;top:866px;width:3px;height:1px;background:#5f5f5f"></div><div class="a" style="left:14px;top:871px;width:3px;height:1px;background:#5f5f5f"></div><div class="a" style="left:14px;top:875px;width:3px;height:1px;background:#5f5f5f"></div><div class="a" style="left:14px;top:879px;width:3px;height:1px;background:#5f5f5f"></div><div class="a" style="left:11px;top:883px;width:6px;height:1px;background:#5f5f5f"></div><div class="a" style="left:14px;top:887px;width:3px;height:1px;background:#5f5f5f"></div><div class="a" style="left:14px;top:891px;width:3px;height:1px;background:#5f5f5f"></div><div class="a" style="left:14px;top:895px;width:3px;height:1px;background:#5f5f5f"></div><div class="a" style="left:2px;top:864px;width:8px;font-size:9px;line-height:8.7px;color:#c8c8c8;text-align:center;word-break:break-all">1600</div><div class="a" style="left:2px;top:906px;width:8px;font-size:9px;line-height:8.7px;color:#c8c8c8;text-align:center;word-break:break-all">1700</div><div class="a" style="left:2px;top:947px;width:8px;font-size:9px;line-height:8.7px;color:#c8c8c8;text-align:center;word-break:break-all">1800</div></div>
<div class="a" style="left:57px;top:112px;width:1px;height:899px;background:#3a3a3a;"></div>
<div class="a" style="left:627px;top:96px;width:1px;height:16px;background:repeating-linear-gradient(180deg,#e0e0e0 0 1px,transparent 1px 2px)"></div>
<div class="a" style="left:40px;top:589px;width:17px;height:1px;background:repeating-linear-gradient(90deg,#e0e0e0 0 1px,transparent 1px 2px)"></div>
<div class="a" style="left:58px;top:112px;width:875px;height:899px;background:#282828;"></div>
<div class="a" style="left:933px;top:96px;width:16px;height:915px;background:#4a4a4a;"></div>
<div class="a" style="left:40px;top:1011px;width:909px;height:16px;background:#535353;"></div>
<div class="a" style="left:40px;top:1011px;width:48px;height:16px;background:#4a4a4a;"></div>
<div class="t" style="left:45px;top:1014px;font-size:11px;color:#e0e0e0">41.35%</div>
<div class="t" style="left:126px;top:1014px;font-size:11px;color:#e0e0e0">文档:6.59M/14.8M</div>
<div class="a" style="left:261px;top:1011px;width:10px;height:16px;background:#4a4a4a;"></div>
<svg class="a" style="left:262px;top:1014px" width="8" height="11"><path d="M2 1 L6 5.5 L2 10" fill="none" stroke="#cfcfcf" stroke-width="1.2"/></svg>
<div class="a" style="left:0px;top:1027px;width:1281px;height:1px;background:#333;"></div>
<div class="a" style="left:0px;top:1028px;width:1281px;height:4px;background:#5a5a5a;"></div>
<div class="a" style="left:0px;top:67px;width:39px;height:12px;background:#424242;"></div>
<svg class="a" style="left:5px;top:70px" width="12" height="7"><path d="M1 0.5 L4.5 3.5 L1 6.5 Z M6 0.5 L9.5 3.5 L6 6.5 Z" fill="#d8d8d8"/></svg>
<div class="a" style="left:0px;top:67px;width:1px;height:965px;background:#424242;"></div>
<div class="a" style="left:1px;top:79px;width:37px;height:948px;background:#535353;"></div>
<div class="a" style="left:38px;top:67px;width:2px;height:965px;background:#3a3a3a;"></div>
<div class="a" style="left:10px;top:82px;width:20px;height:4px;background:repeating-linear-gradient(90deg,#3c3c3c 0 1px,transparent 1px 2px);"></div>
<div class="a" style="left:4px;top:174px;width:31px;height:24px;background:#2f2f2f;border:1px solid #393939"></div>
<svg class="a" style="left:7px;top:97px" width="24" height="22" viewBox="0 0 24 22"><path d="M11.5 4 V19 M4 11.5 H19" stroke="#e2e2e2" stroke-width="1.6"/><path d="M11.5 3 L8.5 6.5 H14.5 Z M11.5 20 L8.5 16.5 H14.5 Z M3 11.5 L6.5 8.5 V14.5 Z M20 11.5 L16.5 8.5 V14.5 Z" fill="#e2e2e2"/></svg>
<svg class="a" style="left:29px;top:111px" width="5" height="5"><path d="M4.5 0.5 L4.5 4.5 L0.5 4.5 Z" fill="#b8b8b8"/></svg>
<svg class="a" style="left:7px;top:123px" width="24" height="22" viewBox="0 0 24 22"><rect x="4.5" y="4.5" width="15" height="12" fill="none" stroke="#e2e2e2" stroke-width="1.5" stroke-dasharray="4 2.2"/></svg>
<svg class="a" style="left:29px;top:137px" width="5" height="5"><path d="M4.5 0.5 L4.5 4.5 L0.5 4.5 Z" fill="#b8b8b8"/></svg>
<svg class="a" style="left:7px;top:149px" width="24" height="22" viewBox="0 0 24 22"><path d="M4.5 5 L12 10 L20 3 L20 13 L12 16.5 L7 11.5 Z" fill="none" stroke="#e2e2e2" stroke-width="1.4" stroke-linejoin="round"/><circle cx="11" cy="14" r="2" fill="none" stroke="#e2e2e2" stroke-width="1.3"/><path d="M10 16 L7 19" stroke="#e2e2e2" stroke-width="1.3"/></svg>
<svg class="a" style="left:29px;top:163px" width="5" height="5"><path d="M4.5 0.5 L4.5 4.5 L0.5 4.5 Z" fill="#b8b8b8"/></svg>
<svg class="a" style="left:7px;top:176px" width="24" height="22" viewBox="0 0 24 22"><path d="M12 4.7 Q10.5 3.1 8 3.3 Q3.5 3.8 3.5 9.5 Q3.5 15.5 8 16.2 Q10 16.3 11 15.3" fill="none" stroke="#e2e2e2" stroke-width="1.7" stroke-linecap="round" stroke-dasharray="0.01 2.9"/><path d="M22.1 2.5 L16.5 8.8 L18.1 10.2 Z" fill="#e2e2e2"/><path d="M16.3 8.5 Q19.5 10.3 17.9 12.9 Q15.3 15.9 10.7 16.1 Q11.7 12.1 13.9 10.1 Q15.1 8.7 16.3 8.5 Z" fill="#e2e2e2"/></svg>
<svg class="a" style="left:29px;top:189px" width="5" height="5"><path d="M4.5 0.5 L4.5 4.5 L0.5 4.5 Z" fill="#b8b8b8"/></svg>
<svg class="a" style="left:7px;top:200px" width="24" height="22" viewBox="0 0 24 22"><path d="M7.5 3 V14.5 H20 M3 7.5 H16.5 V19" fill="none" stroke="#e2e2e2" stroke-width="2"/></svg>
<svg class="a" style="left:29px;top:214px" width="5" height="5"><path d="M4.5 0.5 L4.5 4.5 L0.5 4.5 Z" fill="#b8b8b8"/></svg>
<svg class="a" style="left:7px;top:227px" width="24" height="22" viewBox="0 0 24 22"><path d="M5.5 19.5 L4.5 18.5 L13 10 L15 12 L6.5 20.5 Z" fill="none" stroke="#e2e2e2" stroke-width="1.4"/><path d="M11.5 8.5 L17.5 2.8 Q19.5 1.8 20.8 3.2 Q22 4.6 20.5 6.5 L15 12 Z" fill="#e2e2e2"/><path d="M10.5 7.5 L16 13" stroke="#e2e2e2" stroke-width="2"/></svg>
<svg class="a" style="left:29px;top:241px" width="5" height="5"><path d="M4.5 0.5 L4.5 4.5 L0.5 4.5 Z" fill="#b8b8b8"/></svg>
<svg class="a" style="left:7px;top:253px" width="24" height="22" viewBox="0 0 24 22"><path d="M5 16 L15.5 5.5 Q17 4 18.5 5.5 L20 7 Q21.5 8.5 20 10 L9.5 20.5 Q8 22 6.5 20.5 L5 19 Q3.5 17.5 5 16 Z" fill="#e2e2e2"/><path d="M12 9.6 h1.6 v1.6 h-1.6z M9.4 12.2 h1.6v1.6h-1.6z M14.6 12.2h1.6v1.6h-1.6z M12 14.8h1.6v1.6h-1.6z M12 12.2h1.6v1.6h-1.6z" fill="#535353"/><path d="M4 9 A5 5 0 0 1 10 3.5" fill="none" stroke="#e2e2e2" stroke-width="1.2" stroke-dasharray="1 1.3"/></svg>
<svg class="a" style="left:29px;top:267px" width="5" height="5"><path d="M4.5 0.5 L4.5 4.5 L0.5 4.5 Z" fill="#b8b8b8"/></svg>
<svg class="a" style="left:7px;top:279px" width="24" height="22" viewBox="0 0 24 22"><path d="M19.5 2.5 L11.5 13.5 L13.5 15 Z" fill="#e2e2e2"/><path d="M10.5 13 Q7 13 6 16.5 Q5.5 18.5 4 19.5 Q8 20.5 10.5 19 Q13 17 12.5 14.5 Z" fill="#e2e2e2"/></svg>
<svg class="a" style="left:29px;top:293px" width="5" height="5"><path d="M4.5 0.5 L4.5 4.5 L0.5 4.5 Z" fill="#b8b8b8"/></svg>
<svg class="a" style="left:7px;top:305px" width="24" height="22" viewBox="0 0 24 22"><circle cx="12" cy="6" r="3" fill="#e2e2e2"/><path d="M10.8 8 V12 H5 V16 H19 V12 H13.2 V8 Z" fill="#e2e2e2"/><rect x="5" y="17.5" width="14" height="1.8" fill="#e2e2e2"/></svg>
<svg class="a" style="left:29px;top:319px" width="5" height="5"><path d="M4.5 0.5 L4.5 4.5 L0.5 4.5 Z" fill="#b8b8b8"/></svg>
<svg class="a" style="left:7px;top:331px" width="24" height="22" viewBox="0 0 24 22"><path d="M20.5 2.5 L12.5 13.5 L14.5 15 Z" fill="#e2e2e2"/><path d="M11.5 13 Q8 13 7 16.5 Q6.5 18.5 5 19.5 Q9 20.5 11.5 19 Q14 17 13.5 14.5 Z" fill="#e2e2e2"/><path d="M4 9 Q6 6 10 6.5" fill="none" stroke="#e2e2e2" stroke-width="1.4"/><path d="M3 7 L5 10 L7 7.5 Z" fill="#e2e2e2"/><path d="M18 10 Q19 14 16 18" fill="none" stroke="#e2e2e2" stroke-width="1.1" stroke-dasharray="1 1.3"/></svg>
<svg class="a" style="left:29px;top:345px" width="5" height="5"><path d="M4.5 0.5 L4.5 4.5 L0.5 4.5 Z" fill="#b8b8b8"/></svg>
<svg class="a" style="left:7px;top:357px" width="24" height="22" viewBox="0 0 24 22"><path d="M13 4 L19.5 10.5 L12 18 H8.5 L4.5 14 Z" fill="none" stroke="#e2e2e2" stroke-width="1.4" stroke-linejoin="round"/><path d="M13 4 L19.5 10.5 L15 15 L8.5 8.5 Z" fill="#e2e2e2"/><path d="M11 18 H20" stroke="#e2e2e2" stroke-width="1.3"/></svg>
<svg class="a" style="left:29px;top:371px" width="5" height="5"><path d="M4.5 0.5 L4.5 4.5 L0.5 4.5 Z" fill="#b8b8b8"/></svg>
<div class="a" style="left:11px;top:387px;width:17px;height:14px;border:1.5px solid #e2e2e2;background:linear-gradient(135deg,#111 0%,#777 55%,#ddd 100%)"></div>
<svg class="a" style="left:29px;top:397px" width="5" height="5"><path d="M4.5 0.5 L4.5 4.5 L0.5 4.5 Z" fill="#b8b8b8"/></svg>
<svg class="a" style="left:7px;top:409px" width="24" height="22" viewBox="0 0 24 22"><path d="M12 3.5 Q16.5 9.5 16.5 13 A4.5 4.5 0 0 1 7.5 13 Q7.5 9.5 12 3.5 Z" fill="#e2e2e2"/></svg>
<svg class="a" style="left:29px;top:423px" width="5" height="5"><path d="M4.5 0.5 L4.5 4.5 L0.5 4.5 Z" fill="#b8b8b8"/></svg>
<svg class="a" style="left:7px;top:435px" width="24" height="22" viewBox="0 0 24 22"><circle cx="14" cy="8.5" r="5" fill="#e2e2e2"/><path d="M11 12 L5 18" stroke="#e2e2e2" stroke-width="2"/></svg>
<svg class="a" style="left:29px;top:449px" width="5" height="5"><path d="M4.5 0.5 L4.5 4.5 L0.5 4.5 Z" fill="#b8b8b8"/></svg>
<svg class="a" style="left:7px;top:461px" width="24" height="22" viewBox="0 0 24 22"><path d="M17 4.5 L20 7.5 L17.5 10 L15 15.5 L5 19.5 L9 9.5 L14.5 7 Z" fill="none" stroke="#e2e2e2" stroke-width="1.4" stroke-linejoin="round"/><path d="M5.5 19 L11 13.5" stroke="#e2e2e2" stroke-width="1.1"/><circle cx="11.8" cy="12.7" r="1.2" fill="#e2e2e2"/><path d="M14.5 6 L19 10.5" stroke="#e2e2e2" stroke-width="1.3"/></svg>
<svg class="a" style="left:29px;top:475px" width="5" height="5"><path d="M4.5 0.5 L4.5 4.5 L0.5 4.5 Z" fill="#b8b8b8"/></svg>
<svg class="a" style="left:7px;top:487px" width="24" height="22" viewBox="0 0 24 22"><path d="M5 4 H19 V8 H17.8 Q17.5 5.8 15.5 5.8 H13.3 V17.5 L15.5 18 V19.5 H8.5 V18 L10.7 17.5 V5.8 H8.5 Q6.5 5.8 6.2 8 H5 Z" fill="#e2e2e2"/></svg>
<svg class="a" style="left:29px;top:501px" width="5" height="5"><path d="M4.5 0.5 L4.5 4.5 L0.5 4.5 Z" fill="#b8b8b8"/></svg>
<svg class="a" style="left:7px;top:513px" width="24" height="22" viewBox="0 0 24 22"><path d="M8 3.5 V18 L11.5 14.5 L14 20 L16 19 L13.5 13.5 H18.5 Z" fill="#111" stroke="#e2e2e2" stroke-width="1.4" stroke-linejoin="round"/></svg>
<svg class="a" style="left:29px;top:527px" width="5" height="5"><path d="M4.5 0.5 L4.5 4.5 L0.5 4.5 Z" fill="#b8b8b8"/></svg>
<svg class="a" style="left:7px;top:539px" width="24" height="22" viewBox="0 0 24 22"><path d="M9.5 4 Q12.5 3 13 6.5 Q16 3.5 19 5.5 Q20.5 8 17 10 Q20.5 13 18.5 16 Q15.5 18 13.5 14.5 Q11 20 7.5 18.5 Q5 17 8 13 Q3.5 12.5 4 9.5 Q5 6.5 9 8.5 Q7.5 5 9.5 4 Z" fill="#6a6a6a" stroke="#e2e2e2" stroke-width="1.3"/></svg>
<svg class="a" style="left:29px;top:553px" width="5" height="5"><path d="M4.5 0.5 L4.5 4.5 L0.5 4.5 Z" fill="#b8b8b8"/></svg>
<svg class="a" style="left:7px;top:565px" width="24" height="22" viewBox="0 0 24 22"><path d="M6.5 13 Q5 11 3.8 12 Q3 13 4.5 15 L8 19.5 Q9.5 21 12.5 21 H14.5 Q19 21 19 16 V8 Q19 6.7 18 6.7 Q17 6.7 17 8 V12 H16.3 V5.5 Q16.3 4.2 15.2 4.2 Q14.2 4.2 14.2 5.5 V11.5 H13.5 V4 Q13.5 2.8 12.4 2.8 Q11.3 2.8 11.3 4 V11.5 H10.6 V5.5 Q10.6 4.3 9.5 4.3 Q8.4 4.3 8.4 5.5 V14 Z" fill="#e2e2e2"/></svg>
<svg class="a" style="left:29px;top:579px" width="5" height="5"><path d="M4.5 0.5 L4.5 4.5 L0.5 4.5 Z" fill="#b8b8b8"/></svg>
<svg class="a" style="left:7px;top:591px" width="24" height="22" viewBox="0 0 24 22"><circle cx="10.5" cy="9.5" r="6" fill="none" stroke="#e2e2e2" stroke-width="1.6"/><path d="M15 14 L20 19" stroke="#e2e2e2" stroke-width="2.2"/><path d="M7.5 8 Q8.5 6.5 10.5 6.5" fill="none" stroke="#e2e2e2" stroke-width="1"/></svg>
<svg class="a" style="left:7px;top:617px" width="24" height="22" viewBox="0 0 24 22"><circle cx="5.5" cy="11" r="2" fill="#e2e2e2"/><circle cx="12" cy="11" r="2" fill="#e2e2e2"/><circle cx="18.5" cy="11" r="2" fill="#e2e2e2"/></svg>
<svg class="a" style="left:29px;top:634px" width="5" height="5"><path d="M4.5 0.5 L4.5 4.5 L0.5 4.5 Z" fill="#b8b8b8"/></svg>
<div class="a" style="left:8px;top:651px;width:6px;height:6px;background:#e2e2e2;"></div>
<div class="a" style="left:4px;top:647px;width:7px;height:7px;background:#111;border:1px solid #e2e2e2"></div>
<svg class="a" style="left:21px;top:643px" width="15" height="16" viewBox="0 0 15 16"><path d="M4 5 H10.5 V11" fill="none" stroke="#e2e2e2" stroke-width="1.5"/><path d="M1 5 L4.8 1.8 V8.2 Z M10.5 14.5 L7.3 10.7 H13.7 Z" fill="#e2e2e2"/></svg>
<div class="a" style="left:14px;top:672px;width:20px;height:20px;background:#fff;border:1px solid #222"></div>
<div class="a" style="left:5px;top:662px;width:19px;height:20px;background:#000;border:1px solid #eee"></div>
<svg class="a" style="left:7px;top:698px" width="24" height="22" viewBox="0 0 24 22"><rect x="3.5" y="5.5" width="16" height="12" fill="none" stroke="#e2e2e2" stroke-width="1.4"/><circle cx="11.5" cy="11.5" r="3.8" fill="none" stroke="#e2e2e2" stroke-width="1.2" stroke-dasharray="1 1.2"/></svg>
<svg class="a" style="left:7px;top:725px" width="24" height="22" viewBox="0 0 24 22"><rect x="9" y="4.5" width="11" height="9" fill="none" stroke="#e2e2e2" stroke-width="1.4"/><path d="M9 8.5 H3.5 V18.5 H14 V13.5" fill="none" stroke="#e2e2e2" stroke-width="1.4"/></svg>
<svg class="a" style="left:29px;top:741px" width="5" height="5"><path d="M4.5 0.5 L4.5 4.5 L0.5 4.5 Z" fill="#b8b8b8"/></svg>
<div class="a" style="left:949px;top:67px;width:3px;height:960px;background:#3a3a3a;"></div>
<div class="a" style="left:952px;top:67px;width:325px;height:12px;background:#424242;"></div>
<svg class="a" style="left:973px;top:70px" width="12" height="7"><path d="M5 0.5 L1.5 3.5 L5 6.5 Z M10 0.5 L6.5 3.5 L10 6.5 Z" fill="#d8d8d8"/></svg>
<svg class="a" style="left:1262px;top:70px" width="12" height="7"><path d="M1 0.5 L4.5 3.5 L1 6.5 Z M6 0.5 L9.5 3.5 L6 6.5 Z" fill="#d8d8d8"/></svg>
<div class="a" style="left:952px;top:79px;width:37px;height:948px;background:#535353;"></div>
<div class="a" style="left:952px;top:119px;width:37px;height:1px;background:#3f3f3f;"></div>
<div class="a" style="left:961px;top:82px;width:20px;height:4px;background:repeating-linear-gradient(90deg,#3c3c3c 0 1px,transparent 1px 2px);"></div>
<div class="a" style="left:952px;top:160px;width:37px;height:1px;background:#3f3f3f;"></div>
<div class="a" style="left:961px;top:123px;width:20px;height:4px;background:repeating-linear-gradient(90deg,#3c3c3c 0 1px,transparent 1px 2px);"></div>
<div class="a" style="left:952px;top:229px;width:37px;height:1px;background:#3f3f3f;"></div>
<div class="a" style="left:961px;top:164px;width:20px;height:4px;background:repeating-linear-gradient(90deg,#3c3c3c 0 1px,transparent 1px 2px);"></div>
<svg class="a" style="left:960px;top:90px" width="22" height="22"><rect x="2.5" y="2.5" width="4" height="4" fill="none" stroke="#e2e2e2" stroke-width="1.2"/><rect x="2.5" y="8.5" width="4" height="4" fill="none" stroke="#e2e2e2" stroke-width="1.2"/><rect x="2" y="14" width="5" height="5" fill="#e2e2e2"/><path d="M11 5 Q13 3 15 3.5 Q18 5 17.5 10 Q17 15 12.5 19" fill="none" stroke="#e2e2e2" stroke-width="1.6"/><path d="M9.5 3 L14 1.5 L13 6 Z" fill="#e2e2e2"/></svg>
<svg class="a" style="left:960px;top:131px" width="22" height="22"><path d="M2 3 H10 L17 12 V20 H8 L2 12 Z" fill="none" stroke="#e2e2e2" stroke-width="1.2"/><path d="M2 3 L2 11 M10 3 L10 11 L2 11" fill="none" stroke="#e2e2e2" stroke-width="1.2"/><path d="M10 11 H17 V20 H10 Z M10 11 L17 20" fill="none" stroke="#e2e2e2" stroke-width="1.2"/></svg>
<div class="t" style="left:963px;top:176px;font-size:17px;color:#e2e2e2">A</div>
<div class="a" style="left:977px;top:175px;width:1px;height:17px;background:#e2e2e2;"></div>
<div class="t" style="left:965px;top:203px;font-size:17px;font-weight:bold;color:#e2e2e2">¶</div>
<div class="a" style="left:989px;top:79px;width:3px;height:948px;background:#3a3a3a;"></div>
<div class="a" style="left:1277px;top:33px;width:1px;height:995px;background:#333;"></div>
<div class="a" style="left:1278px;top:33px;width:3px;height:995px;background:#5a5a5a;"></div>
<div class="a" style="left:992px;top:79px;width:285px;height:314px;background:#535353;"></div>
<div class="a" style="left:992px;top:79px;width:285px;height:27px;background:#424242;"></div>
<div class="a" style="left:992px;top:79px;width:40px;height:28px;background:#535353;"></div>
<div class="a" style="left:1033px;top:79px;width:41px;height:27px;background:#474747;"></div>
<div class="a" style="left:1032px;top:79px;width:1px;height:27px;background:#3a3a3a;"></div>
<div class="a" style="left:1074px;top:79px;width:1px;height:27px;background:#3a3a3a;"></div>
<div class="t" style="left:1001px;top:87px;color:#eaeaea">颜色</div>
<div class="t" style="left:1043px;top:87px;color:#b3b3b3">色板</div>
<svg class="a" style="left:1259px;top:88px" width="12" height="9"><path d="M0.5 1 H11 M0.5 3.5 H11 M0.5 6 H11 M0.5 8.5 H11" stroke="#cfcfcf" stroke-width="1"/></svg>
<div class="a" style="left:1010px;top:126px;width:21px;height:21px;background:#fff;border:1px solid #3a3a3a"></div>
<div class="a" style="left:1000px;top:115px;width:23px;height:23px;background:#000;border:2px solid #f0f0f0;outline:1px solid #3a3a3a"></div>
<div class="a" style="left:1037px;top:113px;width:187px;height:274px;background:linear-gradient(to bottom,rgba(0,0,0,0),#000),linear-gradient(to right,#fff,#f00)"></div>
<div class="a" style="left:1241px;top:113px;width:19px;height:274px;background:linear-gradient(to bottom,#f00 0%,#f0f 16.67%,#00f 33.33%,#0ff 50%,#0f0 66.67%,#ff0 83.33%,#f00 100%)"></div>
<svg class="a" style="left:1034px;top:379px" width="10" height="10"><path d="M2 2 A5 5 0 0 1 8 7" fill="none" stroke="#fff" stroke-width="1.2"/></svg>
<svg class="a" style="left:1231px;top:380px" width="9" height="10"><path d="M1 1 L8 5 L1 9 Z" fill="#e8e8e8"/></svg>
<div class="a" style="left:992px;top:393px;width:285px;height:2px;background:#393939;"></div>
<div class="a" style="left:992px;top:395px;width:285px;height:315px;background:#535353;"></div>
<div class="a" style="left:992px;top:395px;width:285px;height:28px;background:#454545;"></div>
<div class="a" style="left:992px;top:395px;width:41px;height:29px;background:#535353;"></div>
<div class="a" style="left:1033px;top:395px;width:41px;height:28px;background:#4a4a4a;"></div>
<div class="a" style="left:1033px;top:395px;width:1px;height:28px;background:#3a3a3a;"></div>
<div class="a" style="left:1074px;top:395px;width:1px;height:28px;background:#3a3a3a;"></div>
<div class="t" style="left:1003px;top:404px;color:#eaeaea">属性</div>
<div class="t" style="left:1043px;top:404px;color:#b3b3b3">调整</div>
<svg class="a" style="left:1260px;top:405px" width="12" height="9"><path d="M0.5 1 H11 M0.5 3.5 H11 M0.5 6 H11 M0.5 8.5 H11" stroke="#cfcfcf" stroke-width="1"/></svg>
<div class="a" style="left:1003px;top:430px;width:22px;height:23px;background:#3c3c3c;border-radius:2px"></div>
<svg class="a" style="left:1006px;top:434px" width="16" height="14"><rect x="0.5" y="0.5" width="15" height="13" fill="none" stroke="#e2e2e2" stroke-width="1.2"/><path d="M2 12 L6 6 L8 8 L10 5 L14 12 Z" fill="#e2e2e2"/><circle cx="11.5" cy="3.5" r="1.2" fill="#e2e2e2"/></svg>
<div class="t" style="left:1032px;top:435px;color:#e6e6e6">像素图层属性</div>
<div class="a" style="left:992px;top:457px;width:269px;height:1px;background:#3e3e3e;"></div>
<div class="a" style="left:1262px;top:458px;width:14px;height:226px;background:#4b4b4b;"></div>
<div class="t" style="left:1003px;top:472px;color:#c8c8c8;font-size:12px">W:</div>
<div class="a" style="left:1024px;top:468px;width:61px;height:19px;background:#474747;border:1px solid #5e5e5e"></div>
<div class="a" style="left:1093px;top:465px;width:24px;height:25px;background:#3a3a3a;border-radius:3px"></div>
<svg class="a" style="left:1097px;top:471px" width="16" height="12"><rect x="1" y="2" width="7" height="7" rx="3.5" fill="none" stroke="#e2e2e2" stroke-width="1.3"/><rect x="8" y="2" width="7" height="7" rx="3.5" fill="none" stroke="#e2e2e2" stroke-width="1.3"/><path d="M4.5 5.5 H11.5" stroke="#e2e2e2" stroke-width="1.3"/></svg>
<div class="t" style="left:1128px;top:472px;color:#c8c8c8">H:</div>
<div class="a" style="left:1146px;top:468px;width:61px;height:19px;background:#474747;border:1px solid #5e5e5e"></div>
<div class="t" style="left:1007px;top:499px;color:#c8c8c8">X:</div>
<div class="a" style="left:1024px;top:496px;width:61px;height:17px;background:#464646;border:1px solid #5e5e5e"></div>
<div class="t" style="left:1025px;top:499px;color:#f0f0f0">801 像素</div>
<div class="t" style="left:1130px;top:499px;color:#c8c8c8">Y:</div>
<div class="a" style="left:1144px;top:496px;width:63px;height:17px;background:#464646;border:1px solid #5e5e5e"></div>
<div class="t" style="left:1146px;top:499px;color:#f0f0f0">69 像素</div>
<div class="a" style="left:992px;top:709px;width:285px;height:3px;background:#393939;"></div>
<div class="a" style="left:992px;top:712px;width:285px;height:315px;background:#535353;"></div>
<div class="a" style="left:992px;top:712px;width:285px;height:28px;background:#454545;"></div>
<div class="a" style="left:992px;top:712px;width:41px;height:29px;background:#535353;"></div>
<div class="a" style="left:1033px;top:712px;width:41px;height:28px;background:#4a4a4a;"></div>
<div class="a" style="left:1033px;top:712px;width:1px;height:28px;background:#3a3a3a;"></div>
<div class="a" style="left:1074px;top:712px;width:1px;height:28px;background:#3a3a3a;"></div>
<div class="a" style="left:1075px;top:712px;width:41px;height:28px;background:#4a4a4a;"></div>
<div class="a" style="left:1116px;top:712px;width:1px;height:28px;background:#3a3a3a;"></div>
<div class="t" style="left:1002px;top:721px;color:#eaeaea">图层</div>
<div class="t" style="left:1043px;top:721px;color:#b3b3b3">通道</div>
<div class="t" style="left:1085px;top:721px;color:#b3b3b3">路径</div>
<svg class="a" style="left:1260px;top:722px" width="12" height="9"><path d="M0.5 1 H11 M0.5 3.5 H11 M0.5 6 H11 M0.5 8.5 H11" stroke="#cfcfcf" stroke-width="1"/></svg>
<div class="a" style="left:996px;top:749px;width:86px;height:19px;background:#444;border:1px solid #3c3c3c;border-radius:2px"></div>
<svg class="a" style="left:1002px;top:752px" width="12" height="13"><circle cx="7.5" cy="5" r="3.6" fill="none" stroke="#e2e2e2" stroke-width="1.4"/><path d="M5 7.5 L1.5 11" stroke="#e2e2e2" stroke-width="1.6"/></svg>
<div class="t" style="left:1019px;top:753px;color:#eaeaea">类型</div>
<svg class="a" style="left:1070px;top:755px" width="10" height="8"><path d="M1 2 L5 6 L9 2" fill="none" stroke="#cfcfcf" stroke-width="1.2"/></svg>
<svg class="a" style="left:1097px;top:751px" width="14" height="12"><rect x="1" y="1" width="12" height="10" fill="none" stroke="#e2e2e2" stroke-width="1.3"/><path d="M3 9 L5.5 5 L7 7 L8.5 5 L11 9 Z" fill="#e2e2e2"/></svg>
<svg class="a" style="left:1121px;top:750px" width="14" height="14"><circle cx="7" cy="7" r="5.5" fill="none" stroke="#e2e2e2" stroke-width="1.5"/><path d="M11 3 L3 11 A5.5 5.5 0 0 0 11 3 Z" fill="#e2e2e2"/></svg>
<svg class="a" style="left:1146px;top:751px" width="14" height="13"><path d="M1 1 H13 V4 H12 Q11.5 2.5 10 2.5 H8 V10.5 L9.5 11 V12 H4.5 V11 L6 10.5 V2.5 H4 Q2.5 2.5 2 4 H1 Z" fill="#e2e2e2"/></svg>
<svg class="a" style="left:1170px;top:750px" width="14" height="14"><rect x="2.5" y="2.5" width="9" height="9" fill="none" stroke="#e2e2e2" stroke-width="1.2"/><rect x="1" y="1" width="3" height="3" fill="#535353" stroke="#e2e2e2" stroke-width="1"/><rect x="10" y="1" width="3" height="3" fill="#535353" stroke="#e2e2e2" stroke-width="1"/><rect x="1" y="10" width="3" height="3" fill="#535353" stroke="#e2e2e2" stroke-width="1"/><rect x="10" y="10" width="3" height="3" fill="#535353" stroke="#e2e2e2" stroke-width="1"/></svg>
<svg class="a" style="left:1194px;top:750px" width="14" height="14"><path d="M5 1 H9.5 L12.5 4 V13 H5 Z" fill="none" stroke="#e2e2e2" stroke-width="1.2"/><rect x="1.5" y="7" width="6" height="6" fill="#e2e2e2"/></svg>
<div class="a" style="left:1222px;top:755px;width:10px;height:14px;background:#3a3a3a;border-radius:5px"></div>
<div class="a" style="left:1222px;top:749px;width:10px;height:10px;background:#e0e0e0;border-radius:50%"></div>
<div class="a" style="left:992px;top:772px;width:284px;height:1px;background:#3e3e3e;"></div>
<div class="a" style="left:996px;top:776px;width:117px;height:19px;background:#444;border:1px solid #3c3c3c;border-radius:2px"></div>
<div class="t" style="left:1006px;top:780px;color:#eaeaea">正常</div>
<svg class="a" style="left:1101px;top:782px" width="10" height="8"><path d="M1 2 L5 6 L9 2" fill="none" stroke="#cfcfcf" stroke-width="1.2"/></svg>
<div class="t" style="left:1120px;top:780px;color:#d8d8d8">不透明度:</div>
<div class="a" style="left:1178px;top:776px;width:38px;height:19px;background:#444;border:1px solid #3c3c3c"></div>
<div class="a" style="left:1217px;top:776px;width:15px;height:19px;background:#454545;border:1px solid #3c3c3c"></div>
<div class="t" style="left:1180px;top:780px;color:#eaeaea">100%</div>
<svg class="a" style="left:1220px;top:782px" width="10" height="8"><path d="M1 2 L5 6 L9 2" fill="none" stroke="#cfcfcf" stroke-width="1.2"/></svg>
<div class="a" style="left:992px;top:799px;width:284px;height:1px;background:#3e3e3e;"></div>
<div class="t" style="left:999px;top:807px;color:#d8d8d8">锁定:</div>
<svg class="a" style="left:1035px;top:806px" width="12" height="12"><rect x="0.5" y="0.5" width="11" height="11" fill="none" stroke="#e2e2e2" stroke-width="1"/><path d="M1 1h3.3v3.3H1z M7.6 1h3.3v3.3H7.6z M4.3 4.3h3.3v3.3H4.3z M1 7.6h3.3v3.3H1z M7.6 7.6h3.3v3.3H7.6z" fill="#e2e2e2"/></svg>
<svg class="a" style="left:1057px;top:804px" width="14" height="16"><path d="M13 1 L6 9 L7.5 10.5 Z" fill="#e2e2e2"/><path d="M5.5 9.5 Q3 10 2.5 12.5 Q2 14 1 15 Q4 15.5 6 14 Q7.5 12.5 7 11 Z" fill="#e2e2e2"/></svg>
<svg class="a" style="left:1078px;top:805px" width="15" height="15"><path d="M7.5 1.5 V13.5 M1.5 7.5 H13.5" stroke="#e2e2e2" stroke-width="1.4"/><path d="M7.5 0.5 L5 3.5 H10 Z M7.5 14.5 L5 11.5 H10 Z M0.5 7.5 L3.5 5 V10 Z M14.5 7.5 L11.5 5 V10 Z" fill="#e2e2e2"/></svg>
<svg class="a" style="left:1100px;top:805px" width="15" height="15"><path d="M3.5 1 V11.5 H14 M1 3.5 H11.5 V14" fill="none" stroke="#e2e2e2" stroke-width="1.3"/><path d="M11 1 L13 3" stroke="#e2e2e2" stroke-width="1"/></svg>
<svg class="a" style="left:1124px;top:805px" width="12" height="14"><path d="M3 6 V4.5 A3 3 0 0 1 9 4.5 V6" fill="none" stroke="#e2e2e2" stroke-width="1.6"/><rect x="1" y="6" width="10" height="7.5" fill="#e2e2e2"/><rect x="5.2" y="8.5" width="1.6" height="2" fill="#535353"/></svg>
<div class="t" style="left:1145px;top:807px;color:#d8d8d8">填充:</div>
<div class="a" style="left:1178px;top:803px;width:38px;height:19px;background:#444;border:1px solid #3c3c3c"></div>
<div class="a" style="left:1217px;top:803px;width:15px;height:19px;background:#454545;border:1px solid #3c3c3c"></div>
<div class="t" style="left:1180px;top:807px;color:#eaeaea">100%</div>
<svg class="a" style="left:1220px;top:809px" width="10" height="8"><path d="M1 2 L5 6 L9 2" fill="none" stroke="#cfcfcf" stroke-width="1.2"/></svg>
<div class="a" style="left:992px;top:825px;width:284px;height:1px;background:#3e3e3e;"></div>
<div class="a" style="left:992px;top:826px;width:284px;height:176px;background:#4e4e4e;"></div>
<div class="a" style="left:992px;top:828px;width:269px;height:27px;background:#6a6a6a;"></div>
<div class="a" style="left:992px;top:855px;width:269px;height:1px;background:#474747;"></div>
<div class="a" style="left:992px;top:856px;width:269px;height:27px;background:#535353;"></div>
<svg class="a" style="left:1000px;top:837px" width="15" height="10"><path d="M0.6 5 Q7.5 -2 14.4 5 Q7.5 12 0.6 5 Z" fill="#e8e8e8"/><circle cx="7.5" cy="5" r="2.9" fill="#3c3c3c"/><circle cx="8.3" cy="4" r="0.9" fill="#e8e8e8"/></svg>
<svg class="a" style="left:1000px;top:865px" width="15" height="10"><path d="M0.6 5 Q7.5 -2 14.4 5 Q7.5 12 0.6 5 Z" fill="#e8e8e8"/><circle cx="7.5" cy="5" r="2.9" fill="#3c3c3c"/><circle cx="8.3" cy="4" r="0.9" fill="#e8e8e8"/></svg>
<div class="a" style="left:1024px;top:829px;width:36px;height:25px;border:2px solid #f2f2f2;clip-path:polygon(0 0,35% 0,35% 12%,65% 12%,65% 0,100% 0,100% 100%,65% 100%,65% 88%,35% 88%,35% 100%,0 100%)"></div>
<div class="a" style="left:1026px;top:831px;width:32px;height:21px;border:1.5px solid #222;background-color:#fff;background-image:linear-gradient(45deg,#c8c8c8 25%,transparent 25%,transparent 75%,#c8c8c8 75%),linear-gradient(45deg,#c8c8c8 25%,transparent 25%,transparent 75%,#c8c8c8 75%);background-size:8px 8px;background-position:0 0,4px 4px"></div>
<svg class="a" style="left:1037px;top:834px" width="10" height="17"><path d="M5 1.2 a1.3 1.3 0 1 1 0.01 0 Z M3.6 3.2 h2.8 l0.9 1 v4.5 l-0.6 0.4 v6.5 h-1.1 v-6 h-0.3 v6 h-1.1 v-6.5 l-0.6 -0.4 v-4.5 Z" fill="#55504a"/><path d="M3.7 3.3 h2.6 l0.8 1 v4 h-4.2 v-4 Z" fill="#8f9296"/></svg>
<div class="a" style="left:1026px;top:860px;width:32px;height:20px;background:#cdcdd3;border:1px solid #1e1e1e"></div>
<svg class="a" style="left:1037px;top:862px" width="10" height="17"><path d="M5 1.2 a1.3 1.3 0 1 1 0.01 0 Z M3.6 3.2 h2.8 l0.9 1 v4.5 l-0.6 0.4 v6.5 h-1.1 v-6 h-0.3 v6 h-1.1 v-6.5 l-0.6 -0.4 v-4.5 Z" fill="#55504a"/><path d="M3.7 3.3 h2.6 l0.8 1 v4 h-4.2 v-4 Z" fill="#8f9296"/></svg>
<div class="t" style="left:1068px;top:835px;color:#f0f0f0">图层 1</div>
<div class="t" style="left:1068px;top:863px;color:#f0f0f0">背景</div>
<svg class="a" style="left:1233px;top:864px" width="11" height="13"><path d="M3 5.5 V4 A2.5 2.5 0 0 1 8 4 V5.5" fill="none" stroke="#e2e2e2" stroke-width="1.2"/><rect x="1" y="5.5" width="9" height="6.5" fill="none" stroke="#e2e2e2" stroke-width="1.2"/><rect x="5" y="8" width="1.2" height="1.5" fill="#e2e2e2"/></svg>
<div class="a" style="left:978px;top:823px;width:165px;height:38px;border:3px solid #e0393e"></div>
<div class="a" style="left:992px;top:1002px;width:284px;height:1px;background:#3e3e3e;"></div>
<div class="a" style="left:992px;top:1003px;width:284px;height:24px;background:#535353;"></div>
<svg class="a" style="left:1071px;top:1007px" width="18" height="14"><rect x="1" y="4" width="8" height="6" rx="3" fill="none" stroke="#9a9a9a" stroke-width="1.3"/><rect x="8" y="4" width="8" height="6" rx="3" fill="none" stroke="#9a9a9a" stroke-width="1.3"/></svg>
<div class="t" style="left:1100px;top:1007px;font-style:italic;font-size:14px;color:#e2e2e2;font-family:'Liberation Serif',serif">fx</div>
<svg class="a" style="left:1125px;top:1007px" width="18" height="14"><rect x="1" y="2" width="15" height="11" fill="#e2e2e2"/><circle cx="8.5" cy="7.5" r="3.3" fill="#535353"/></svg>
<svg class="a" style="left:1152px;top:1007px" width="18" height="14"><circle cx="8" cy="7" r="5.5" fill="none" stroke="#e2e2e2" stroke-width="1.5"/><path d="M12 3 L4 11 A5.5 5.5 0 0 0 12 3 Z" fill="#e2e2e2"/></svg>
<svg class="a" style="left:1179px;top:1007px" width="18" height="14"><path d="M1 3 H6 L7 4.5 H16 V13 H1 Z" fill="#e2e2e2"/></svg>
<svg class="a" style="left:1206px;top:1007px" width="18" height="14"><path d="M2 1.5 H15 V9 L10 13 H2 Z" fill="none" stroke="#e2e2e2" stroke-width="1.3"/><path d="M10 13 V9 H15" fill="none" stroke="#e2e2e2" stroke-width="1.3"/></svg>
<svg class="a" style="left:1233px;top:1007px" width="18" height="14"><path d="M2 3 H14 M6 3 V1.5 H10 V3 M3.5 3 V13 H12.5 V3 M6 5.5 V11 M8 5.5 V11 M10 5.5 V11" fill="none" stroke="#e2e2e2" stroke-width="1.2"/></svg>
<svg class="a" style="left:1106px;top:1022px" width="6" height="4"><path d="M0 0 H5 L2.5 3 Z" fill="#e2e2e2"/></svg>
<svg class="a" style="left:1159px;top:1022px" width="6" height="4"><path d="M0 0 H5 L2.5 3 Z" fill="#e2e2e2"/></svg>
<svg class="a" style="left:1018px;top:955px" width="56" height="52" viewBox="0 0 56 52">
<path d="M27.8 3 L33 12.4 L37.1 7.2 Q40 15 46 20 Q53 26 53.4 34.5 Q53 41 51 45 Q47 49 40 48 Q32 47 27.8 50.2 Q23 47 15 48 Q8 49 5.7 46 Q2.5 41 2.8 32.8 Q3 25 10 19 Q16 14 18.5 10.7 L19 13 Z" fill="#e0e0e0"/>
<path d="M2.8 39 Q8 42 14.4 41.5 Q22 41 25 37 A6.8 6.8 0 1 0 13 33 Q13.5 35.5 16 36" fill="none" stroke="#535353" stroke-width="3"/>
<path d="M52.8 39 Q47.6 42 41.2 41.5 Q33.6 41 30.6 37 A6.8 6.8 0 1 1 42.6 33 Q42.1 35.5 39.6 36" fill="none" stroke="#535353" stroke-width="3"/>
</svg>
<div class="t" style="left:1082px;top:963px;font-size:44px;font-weight:bold;color:#e0e0e0;letter-spacing:0px;line-height:1">悟空问答</div>
<div class="a" style="left:98px;top:313px;width:795px;height:498px;background:#1d1d1d;"></div>
<div class="a" style="left:98px;top:313px;width:794px;height:497px;background:#dadadd;"></div>
<div class="a" style="left:98px;top:313px;width:793px;height:496px;background:#cdcdd2;"></div>
<svg class="a" style="left:98px;top:313px;overflow:hidden" width="794" height="497" viewBox="98 313 794 497">
<defs>
<radialGradient id="halo" cx="0.5" cy="0.5" r="0.5"><stop offset="0" stop-color="#dcdce0" stop-opacity="0.9"/><stop offset="1" stop-color="#cdcdd2" stop-opacity="0"/></radialGradient>
<linearGradient id="pants" x1="0" y1="0" x2="1" y2="0"><stop offset="0" stop-color="#65574a"/><stop offset="0.45" stop-color="#716253"/><stop offset="1" stop-color="#645648"/></linearGradient>
<linearGradient id="shirt" x1="0" y1="0" x2="1" y2="0"><stop offset="0" stop-color="#7c7f85"/><stop offset="0.5" stop-color="#93969b"/><stop offset="1" stop-color="#84878c"/></linearGradient>
<pattern id="stripes" width="3" height="3" patternUnits="userSpaceOnUse"><rect width="3" height="3" fill="#8e9196"/><rect width="3" height="1" fill="#7f8287"/></pattern>
<filter id="soft" x="-5%" y="-5%" width="110%" height="110%"><feGaussianBlur stdDeviation="0.45"/></filter><filter id="glow"><feGaussianBlur stdDeviation="4"/></filter><linearGradient id="torsoShade" x1="0" y1="0" x2="1" y2="0"><stop offset="0" stop-color="#000" stop-opacity="0.18"/><stop offset="0.3" stop-color="#000" stop-opacity="0"/><stop offset="0.8" stop-color="#000" stop-opacity="0"/><stop offset="1" stop-color="#000" stop-opacity="0.12"/></linearGradient></defs>
<ellipse cx="495" cy="560" rx="110" ry="260" fill="url(#halo)"/>
<ellipse cx="453" cy="768" rx="7" ry="14" fill="#e2e2e6" filter="url(#glow)" opacity="0.55"/>
<g filter="url(#soft)">
<!-- left forearm + hand -->
<path d="M431 502 L450 503 Q449 520 447 540 Q449 552 453 562 Q456 572 455 580 Q452 585 449 582 Q447 590 443 589 Q437 584 434 575 Q431 563 432 548 Q430 525 431 502 Z" fill="#d0ab97"/>
<path d="M447 558 Q452 566 452 578 Q450 583 448 582 Q449 570 445 560 Z" fill="#e6cbbd"/>
<!-- right forearm + hand -->
<path d="M539 519 L557 517 Q558 532 555 545 Q551 556 543 562 L535 552 Q539 540 539 519 Z" fill="#d0ab97"/>
<!-- pants -->
<path d="M455 537 L535 537 Q541 552 540 562 Q538 572 536.6 580 L532.3 622.6 Q528 650 523.8 676 L515.3 716.5 L510 746 L482 742 L488.6 699.4 Q492 670 494 644 L495 588.5 L494.5 586 L481.2 622.6 Q477 640 475.8 661 L472.6 712 L449.2 712 L447 676 Q443 665 443.9 659 L442.8 637.6 Q444 622 447 612 L450.3 580 Q452 560 453.5 545 Z" fill="url(#pants)"/>
<path d="M494.5 586 L495 588.5 L494 644 Q492 670 488.6 699.4 L482 742 L486 742 Q492 700 496 650 Z" fill="#54473a" opacity="0.7"/>
<path d="M444 640 Q448 655 446 672" stroke="#4e4235" stroke-width="2" fill="none" opacity="0.6"/>
<!-- cuffs -->
<path d="M448.5 709 L474 709 L476 728 Q462 732 451 728 Z" fill="#6c5d4f"/>
<path d="M451 712 L474 712" stroke="#4e4235" stroke-width="1" opacity="0.7"/>
<path d="M482 740 L511 743 L510 753 Q495 755 482 752 Z" fill="#6c5d4f"/>
<!-- shoes -->
<path d="M458 728 Q470 733 481 729 Q482 745 477 761 Q474 772 472.6 778 Q467 782 460 781 Q453 780 453.5 772 Q455 755 458 728 Z" fill="#1d1d20"/>
<path d="M484 752 Q496 755 506 753 Q507 766 513 776 Q520 782 520 787 Q518 792 502 792 Q486 792 483 787 Q481 770 484 752 Z" fill="#1b1b1e"/>
<path d="M462 745 Q463 760 459 773" stroke="#505055" stroke-width="2" fill="none" opacity="0.7"/>
<path d="M490 771 Q502 782 514 785" stroke="#45454a" stroke-width="1.5" fill="none"/>
<path d="M483 788 Q500 792 519 790" stroke="#2e2e32" stroke-width="2" fill="none"/>
<!-- belt -->
<path d="M457 527 L534 527 L534 538 L456 538 Z" fill="#282c45"/>
<rect x="484" y="529" width="10" height="8" fill="#3a3f5c"/>
<!-- shirt torso -->
<path d="M456 415 Q470 410 479 409 L491 403 L521 413 Q535 420 547 431 Q543 455 544 457 Q534 476 533 476 Q537 495 536 495 Q538 510 539 527 L457 527 Q456 500 458 470 Q461 440 456 415 Z" fill="url(#stripes)"/>
<path d="M456 415 Q470 410 479 409 L491 403 L521 413 Q535 420 547 431 Q543 455 544 457 Q534 476 533 476 Q537 495 536 495 Q538 510 539 527 L457 527 Q456 500 458 470 Q461 440 456 415 Z" fill="url(#shirt)" opacity="0.55"/>
<path d="M456 415 Q470 410 479 409 L491 403 L521 413 Q535 420 547 431 Q543 455 544 457 Q534 476 533 476 Q537 495 536 495 Q538 510 539 527 L457 527 Q456 500 458 470 Q461 440 456 415 Z" fill="url(#torsoShade)"/>
<path d="M505 421 Q503 470 499 527" stroke="#6d7075" stroke-width="1.3" fill="none"/>
<circle cx="506" cy="435" r="1.1" fill="#2a2a30"/><circle cx="505" cy="452" r="1.1" fill="#2a2a30"/><circle cx="504" cy="469" r="1.1" fill="#2a2a30"/><circle cx="503" cy="486" r="1.1" fill="#2a2a30"/><circle cx="502" cy="503" r="1.1" fill="#2a2a30"/><circle cx="501" cy="519" r="1.1" fill="#2a2a30"/>
<!-- collar -->
<path d="M479 409 L491 402 L502 421 L497 423 Z" fill="#6e7176"/>
<path d="M521 412 L513 421 L505 420 L515 407 Z" fill="#7e8186"/>
<!-- left sleeve -->
<path d="M458 415.7 Q452 419 448.5 424.2 L443 440 L437.8 458.3 L433.5 477.5 L430.3 495.6 L430.3 503 L451.7 502 L453.8 490.3 L459.1 474.3 L464.4 456.2 L463.4 418.9 Z" fill="#8c8f94"/>
<path d="M458 415.7 Q452 419 448.5 424.2 L443 440 L437.8 458.3 L435.5 468 L461 471 L464.4 456.2 L463.4 418.9 Z" fill="#3d4047"/>
<path d="M443 440 L464 443 M440 448.5 L464 452.5" stroke="#c8c9cc" stroke-width="1.3" opacity="0.85"/>
<path d="M450 425 l1.8 1.8 l-1.8 1.8 l-1.8 -1.8z M456 429 l1.8 1.8 l-1.8 1.8 l-1.8 -1.8z M446 433 l1.5 1.5 l-1.5 1.5 l-1.5 -1.5z M453 434 l1.2 1.2 l-1.2 1.2 l-1.2 -1.2z" fill="#dcdde0"/>
<path d="M437 461 l2 0 M442 462 l2 0 M447 463 l2 0 M452 464 l2 0 M457 465 l2 0" stroke="#b8b9bc" stroke-width="1.2"/>
<path d="M433 482 L457 486 M432 489 L455 492" stroke="#6a6d72" stroke-width="1.4" opacity="0.9"/>
<path d="M430.3 495.6 L453 497 L451.7 502 L430.3 503 Z" fill="#9fa2a6"/>
<!-- right sleeve -->
<path d="M541 428 Q550 434 554 444 Q557 460 558 480 Q559 500 558 518 L539 520 Q537 505 536 495 Q533 485 533 476 Q540 465 544 457 Q542 440 541 428 Z" fill="#878a8f"/>
<path d="M543 430 Q551 436 554 446 Q557 465 557.8 502 L540 503 Q538 490 534.5 478 Q542 468 545 457 Q544 443 543 430 Z" fill="#3f4249"/>
<path d="M537 472 L557 468 M539 480 L557.5 477" stroke="#c8c9cc" stroke-width="1.2" opacity="0.8"/>
<path d="M549 440 l1.8 1.8 l-1.8 1.8 l-1.8 -1.8z M552 452 l1.5 1.5 l-1.5 1.5 l-1.5 -1.5z" fill="#dcdde0"/>
<path d="M538 508 L558 506 M538 514 L558 512" stroke="#6a6d72" stroke-width="1.3" opacity="0.85"/>
<!-- neck -->
<path d="M493.6 396 L521.5 392 L521.5 413 Q506 418 492 405 Z" fill="#c09885"/>
<path d="M493.6 396 Q500 404 506 405 L504 414 Q497 410 492 405 Z" fill="#9c7564" opacity="0.7"/>
<!-- face -->
<path d="M491 367.5 Q490 374 490.5 378.9 Q490.5 385 491.8 389.3 Q493 395 496.2 399 Q500 404 505 405 Q509 405.5 511.9 404.2 Q516 401 518.9 396.3 Q521.5 391 523.2 385.8 L526 380 Q528 374 525.8 371 Q523 362 519 356 Q505 352 495.3 358.8 Q492 362 491 367.5 Z" fill="#d8b7a5"/>
<path d="M523.2 385.8 L526 380 Q529 376 528 372 L525 371 Q524 380 521 388 Z" fill="#c69e8b"/>
<path d="M498 393 Q503 392 508.4 393.8" stroke="#a86e60" stroke-width="1.6" fill="none"/>
<path d="M502 383 Q503 388 500 389" stroke="#b08878" stroke-width="1" fill="none"/>
<!-- hair -->
<path d="M488 373 Q486.5 366 487.5 363 Q488 357 490 353.6 Q492.5 349 496 346.6 Q500 343.5 505 342.6 Q509.5 342 513.6 343 Q517.5 344.5 520.6 347.5 Q524.5 349.5 527.6 352.7 Q530.5 356 531 359.7 Q531.5 364 531 368.4 Q530.5 371.5 529.3 373.6 L525.8 371 Q524.5 365 524 361.4 Q521.5 356.5 518.9 355.3 Q515 357.5 511.9 358 Q508 355 505 355.3 Q499 356.5 495.3 358.8 Q492.5 362 491 367.5 Z" fill="#1e1e23"/>
<!-- glasses -->
<path d="M489 371.5 Q495 369.5 502 370.5 Q503 376 501 379.5 Q495 381.5 490.5 379.5 Q488.5 375.5 489 371.5 Z" fill="#d8b7a5" fill-opacity="0.0" stroke="#3e2619" stroke-width="2.2"/>
<path d="M505 370 Q514 368 522.5 369.5 Q523.5 375.5 521 379.5 Q514 382 507 380 Q504.5 375 505 370 Z" fill="#d8b7a5" fill-opacity="0.0" stroke="#3e2619" stroke-width="2.2"/>
<path d="M502 371.5 Q503.5 370.5 505 371 M522.5 370 L529.5 371" stroke="#43291b" stroke-width="1.8" fill="none"/>
</g>
</svg>
</body></html>
